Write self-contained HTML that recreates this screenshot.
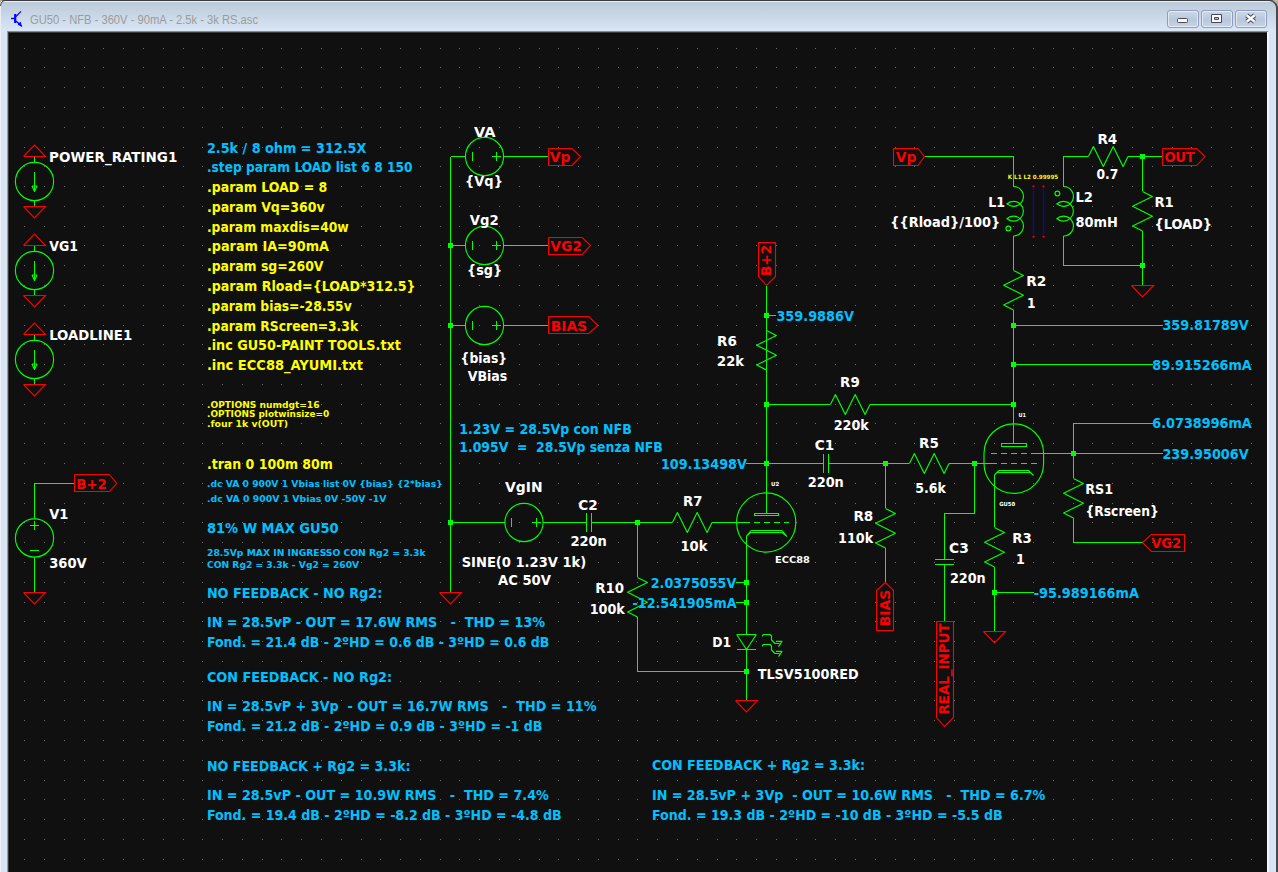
<!DOCTYPE html>
<html><head><meta charset="utf-8"><title>GU50 - NFB - 360V - 90mA - 2.5k - 3k RS.asc</title>
<style>
html,body{margin:0;padding:0;background:#101010;}
#win{position:relative;width:1278px;height:872px;overflow:hidden;background:#d6e4f3;font-family:"Liberation Sans","DejaVu Sans",sans-serif;}
#tb{position:absolute;left:0;top:0;width:1278px;height:32px;background:linear-gradient(#3c3c3c 0,#3c3c3c 1px,#e8eef8 1px,#e8eef8 2px,#bccbdc 2px,#c3d1e0 10px,#d9e6f5 31px);}
#title{position:absolute;left:29.5px;top:12px;font-size:12.3px;line-height:16px;color:#9c9c9c;white-space:nowrap;transform:scaleX(0.909);transform-origin:0 0;}
#client{position:absolute;left:7px;top:31px;width:1260px;height:841px;background:#101010;border-left:1px solid #9a9a9a;border-top:1px solid #8c8c8c;box-shadow:inset 1px 1px 0 #3a3a3a,inset 2px 2px 0 #080808;}
#rb{position:absolute;left:1267px;top:32px;width:2px;height:840px;background:#f4f8fd;}
#re{position:absolute;left:1276px;top:0;width:2px;height:872px;background:#4a4a4a;}
#le{position:absolute;left:0;top:0;width:1px;height:872px;background:#ebeef5;}
.btn{position:absolute;top:10px;width:30px;height:16px;border:1px solid #8f9dc0;border-radius:3px;background:linear-gradient(#cbd8e8,#b7c7dc 55%,#c6d4e6);box-shadow:inset 0 0 0 1px rgba(255,255,255,.55);}
svg{position:absolute;left:0;top:0;}
text{font-family:"DejaVu Sans Condensed","DejaVu Sans","Liberation Sans",sans-serif;font-weight:bold;font-size:13.7px;white-space:pre;}
.w{fill:#fff}.c{fill:#00c0ff}.y{fill:#ffff00}.r{fill:#ff0000}
.rv{fill:#ff0000;font-size:14.6px;}
</style></head><body>
<div id="win">
<div id="tb"></div>
<div id="le"></div><div id="re"></div>
<div id="title">GU50 - NFB - 360V - 90mA - 2.5k - 3k RS.asc</div>
<div class="btn" style="left:1167px"></div><div class="btn" style="left:1201px"></div><div class="btn" style="left:1235px"></div>
<div id="client"></div><div id="rb"></div>
<svg width="1278" height="872" viewBox="0 0 1278 872">
<path d="M0 0h3.5Q0.5 0.5 0 4z" fill="#b9b49c"/><path d="M1278 0h-7Q1277 1 1278 8z" fill="#b9b49c"/><path d="M0.5 6Q1 1 5 0.5" fill="none" stroke="#4a4a4a"/><path d="M1277 9Q1276.5 1.5 1270 0.5" fill="none" stroke="#4a4a4a" stroke-width="1.6"/>
<g id="icon" stroke="#0000ff" fill="none"><path d="M11 18.5h4" stroke-width="1.4"/><path d="M15.2 14v9" stroke-width="2.2"/><path d="M16 16.5l5-5.2" stroke-width="1.1"/><path d="M16 21l6 5.5" stroke-width="1.3"/><path d="M18 24.5l2.5-2.2l0.5 3.2z" fill="#0000ff" stroke-width="1"/></g>
<g id="btnicons">
<rect x="1177.5" y="18.5" width="10" height="4" rx="1" fill="#fafafa" stroke="#46485a"/>
<path d="M1211.5 14.5h10v8h-10z" fill="#fafafa" stroke="#46485a"/><path d="M1214.5 17.5h4v2h-4z" fill="#b8c6da" stroke="#46485a"/>
<path d="M1246.7 15.3l8 6.4M1254.7 15.3l-8 6.4" stroke="#46485a" stroke-width="4.4" fill="none"/><path d="M1246.7 15.3l8 6.4M1254.7 15.3l-8 6.4" stroke="#fafafa" stroke-width="2.5" fill="none"/>
</g>
<path id="dots" d="M24 48h1v1h-1zm20 0h1v1h-1zm20 0h1v1h-1zm20 0h1v1h-1zm19 0h1v1h-1zm20 0h1v1h-1zm20 0h1v1h-1zm20 0h1v1h-1zm20 0h1v1h-1zm19 0h1v1h-1zm20 0h1v1h-1zm20 0h1v1h-1zm20 0h1v1h-1zm19 0h1v1h-1zm20 0h1v1h-1zm20 0h1v1h-1zm20 0h1v1h-1zm20 0h1v1h-1zm19 0h1v1h-1zm20 0h1v1h-1zm20 0h1v1h-1zm20 0h1v1h-1zm19 0h1v1h-1zm20 0h1v1h-1zm20 0h1v1h-1zm20 0h1v1h-1zm20 0h1v1h-1zm19 0h1v1h-1zm20 0h1v1h-1zm20 0h1v1h-1zm20 0h1v1h-1zm19 0h1v1h-1zm20 0h1v1h-1zm20 0h1v1h-1zm20 0h1v1h-1zm20 0h1v1h-1zm19 0h1v1h-1zm20 0h1v1h-1zm20 0h1v1h-1zm20 0h1v1h-1zm19 0h1v1h-1zm20 0h1v1h-1zm20 0h1v1h-1zm20 0h1v1h-1zm20 0h1v1h-1zm19 0h1v1h-1zm20 0h1v1h-1zm20 0h1v1h-1zm20 0h1v1h-1zm20 0h1v1h-1zm19 0h1v1h-1zm20 0h1v1h-1zm20 0h1v1h-1zm20 0h1v1h-1zm19 0h1v1h-1zm20 0h1v1h-1zm20 0h1v1h-1zm20 0h1v1h-1zm20 0h1v1h-1zm19 0h1v1h-1zm20 0h1v1h-1zm20 0h1v1h-1zm20 0h1v1h-1zM24 67h1v1h-1zm20 0h1v1h-1zm20 0h1v1h-1zm20 0h1v1h-1zm19 0h1v1h-1zm20 0h1v1h-1zm20 0h1v1h-1zm20 0h1v1h-1zm20 0h1v1h-1zm19 0h1v1h-1zm20 0h1v1h-1zm20 0h1v1h-1zm20 0h1v1h-1zm19 0h1v1h-1zm20 0h1v1h-1zm20 0h1v1h-1zm20 0h1v1h-1zm20 0h1v1h-1zm19 0h1v1h-1zm20 0h1v1h-1zm20 0h1v1h-1zm20 0h1v1h-1zm19 0h1v1h-1zm20 0h1v1h-1zm20 0h1v1h-1zm20 0h1v1h-1zm20 0h1v1h-1zm19 0h1v1h-1zm20 0h1v1h-1zm20 0h1v1h-1zm20 0h1v1h-1zm19 0h1v1h-1zm20 0h1v1h-1zm20 0h1v1h-1zm20 0h1v1h-1zm20 0h1v1h-1zm19 0h1v1h-1zm20 0h1v1h-1zm20 0h1v1h-1zm20 0h1v1h-1zm19 0h1v1h-1zm20 0h1v1h-1zm20 0h1v1h-1zm20 0h1v1h-1zm20 0h1v1h-1zm19 0h1v1h-1zm20 0h1v1h-1zm20 0h1v1h-1zm20 0h1v1h-1zm20 0h1v1h-1zm19 0h1v1h-1zm20 0h1v1h-1zm20 0h1v1h-1zm20 0h1v1h-1zm19 0h1v1h-1zm20 0h1v1h-1zm20 0h1v1h-1zm20 0h1v1h-1zm20 0h1v1h-1zm19 0h1v1h-1zm20 0h1v1h-1zm20 0h1v1h-1zm20 0h1v1h-1zM24 87h1v1h-1zm20 0h1v1h-1zm20 0h1v1h-1zm20 0h1v1h-1zm19 0h1v1h-1zm20 0h1v1h-1zm20 0h1v1h-1zm20 0h1v1h-1zm20 0h1v1h-1zm19 0h1v1h-1zm20 0h1v1h-1zm20 0h1v1h-1zm20 0h1v1h-1zm19 0h1v1h-1zm20 0h1v1h-1zm20 0h1v1h-1zm20 0h1v1h-1zm20 0h1v1h-1zm19 0h1v1h-1zm20 0h1v1h-1zm20 0h1v1h-1zm20 0h1v1h-1zm19 0h1v1h-1zm20 0h1v1h-1zm20 0h1v1h-1zm20 0h1v1h-1zm20 0h1v1h-1zm19 0h1v1h-1zm20 0h1v1h-1zm20 0h1v1h-1zm20 0h1v1h-1zm19 0h1v1h-1zm20 0h1v1h-1zm20 0h1v1h-1zm20 0h1v1h-1zm20 0h1v1h-1zm19 0h1v1h-1zm20 0h1v1h-1zm20 0h1v1h-1zm20 0h1v1h-1zm19 0h1v1h-1zm20 0h1v1h-1zm20 0h1v1h-1zm20 0h1v1h-1zm20 0h1v1h-1zm19 0h1v1h-1zm20 0h1v1h-1zm20 0h1v1h-1zm20 0h1v1h-1zm20 0h1v1h-1zm19 0h1v1h-1zm20 0h1v1h-1zm20 0h1v1h-1zm20 0h1v1h-1zm19 0h1v1h-1zm20 0h1v1h-1zm20 0h1v1h-1zm20 0h1v1h-1zm20 0h1v1h-1zm19 0h1v1h-1zm20 0h1v1h-1zm20 0h1v1h-1zm20 0h1v1h-1zM24 107h1v1h-1zm20 0h1v1h-1zm20 0h1v1h-1zm20 0h1v1h-1zm19 0h1v1h-1zm20 0h1v1h-1zm20 0h1v1h-1zm20 0h1v1h-1zm20 0h1v1h-1zm19 0h1v1h-1zm20 0h1v1h-1zm20 0h1v1h-1zm20 0h1v1h-1zm19 0h1v1h-1zm20 0h1v1h-1zm20 0h1v1h-1zm20 0h1v1h-1zm20 0h1v1h-1zm19 0h1v1h-1zm20 0h1v1h-1zm20 0h1v1h-1zm20 0h1v1h-1zm19 0h1v1h-1zm20 0h1v1h-1zm20 0h1v1h-1zm20 0h1v1h-1zm20 0h1v1h-1zm19 0h1v1h-1zm20 0h1v1h-1zm20 0h1v1h-1zm20 0h1v1h-1zm19 0h1v1h-1zm20 0h1v1h-1zm20 0h1v1h-1zm20 0h1v1h-1zm20 0h1v1h-1zm19 0h1v1h-1zm20 0h1v1h-1zm20 0h1v1h-1zm20 0h1v1h-1zm19 0h1v1h-1zm20 0h1v1h-1zm20 0h1v1h-1zm20 0h1v1h-1zm20 0h1v1h-1zm19 0h1v1h-1zm20 0h1v1h-1zm20 0h1v1h-1zm20 0h1v1h-1zm20 0h1v1h-1zm19 0h1v1h-1zm20 0h1v1h-1zm20 0h1v1h-1zm20 0h1v1h-1zm19 0h1v1h-1zm20 0h1v1h-1zm20 0h1v1h-1zm20 0h1v1h-1zm20 0h1v1h-1zm19 0h1v1h-1zm20 0h1v1h-1zm20 0h1v1h-1zm20 0h1v1h-1zM24 127h1v1h-1zm20 0h1v1h-1zm20 0h1v1h-1zm20 0h1v1h-1zm19 0h1v1h-1zm20 0h1v1h-1zm20 0h1v1h-1zm20 0h1v1h-1zm20 0h1v1h-1zm19 0h1v1h-1zm20 0h1v1h-1zm20 0h1v1h-1zm20 0h1v1h-1zm19 0h1v1h-1zm20 0h1v1h-1zm20 0h1v1h-1zm20 0h1v1h-1zm20 0h1v1h-1zm19 0h1v1h-1zm20 0h1v1h-1zm20 0h1v1h-1zm20 0h1v1h-1zm19 0h1v1h-1zm20 0h1v1h-1zm20 0h1v1h-1zm20 0h1v1h-1zm20 0h1v1h-1zm19 0h1v1h-1zm20 0h1v1h-1zm20 0h1v1h-1zm20 0h1v1h-1zm19 0h1v1h-1zm20 0h1v1h-1zm20 0h1v1h-1zm20 0h1v1h-1zm20 0h1v1h-1zm19 0h1v1h-1zm20 0h1v1h-1zm20 0h1v1h-1zm20 0h1v1h-1zm19 0h1v1h-1zm20 0h1v1h-1zm20 0h1v1h-1zm20 0h1v1h-1zm20 0h1v1h-1zm19 0h1v1h-1zm20 0h1v1h-1zm20 0h1v1h-1zm20 0h1v1h-1zm20 0h1v1h-1zm19 0h1v1h-1zm20 0h1v1h-1zm20 0h1v1h-1zm20 0h1v1h-1zm19 0h1v1h-1zm20 0h1v1h-1zm20 0h1v1h-1zm20 0h1v1h-1zm20 0h1v1h-1zm19 0h1v1h-1zm20 0h1v1h-1zm20 0h1v1h-1zm20 0h1v1h-1zM24 147h1v1h-1zm20 0h1v1h-1zm20 0h1v1h-1zm20 0h1v1h-1zm19 0h1v1h-1zm20 0h1v1h-1zm20 0h1v1h-1zm20 0h1v1h-1zm20 0h1v1h-1zm19 0h1v1h-1zm20 0h1v1h-1zm20 0h1v1h-1zm20 0h1v1h-1zm19 0h1v1h-1zm20 0h1v1h-1zm20 0h1v1h-1zm20 0h1v1h-1zm20 0h1v1h-1zm19 0h1v1h-1zm20 0h1v1h-1zm20 0h1v1h-1zm20 0h1v1h-1zm19 0h1v1h-1zm20 0h1v1h-1zm20 0h1v1h-1zm20 0h1v1h-1zm20 0h1v1h-1zm19 0h1v1h-1zm20 0h1v1h-1zm20 0h1v1h-1zm20 0h1v1h-1zm19 0h1v1h-1zm20 0h1v1h-1zm20 0h1v1h-1zm20 0h1v1h-1zm20 0h1v1h-1zm19 0h1v1h-1zm20 0h1v1h-1zm20 0h1v1h-1zm20 0h1v1h-1zm19 0h1v1h-1zm20 0h1v1h-1zm20 0h1v1h-1zm20 0h1v1h-1zm20 0h1v1h-1zm19 0h1v1h-1zm20 0h1v1h-1zm20 0h1v1h-1zm20 0h1v1h-1zm20 0h1v1h-1zm19 0h1v1h-1zm20 0h1v1h-1zm20 0h1v1h-1zm20 0h1v1h-1zm19 0h1v1h-1zm20 0h1v1h-1zm20 0h1v1h-1zm20 0h1v1h-1zm20 0h1v1h-1zm19 0h1v1h-1zm20 0h1v1h-1zm20 0h1v1h-1zm20 0h1v1h-1zM24 166h1v1h-1zm20 0h1v1h-1zm20 0h1v1h-1zm20 0h1v1h-1zm19 0h1v1h-1zm20 0h1v1h-1zm20 0h1v1h-1zm20 0h1v1h-1zm20 0h1v1h-1zm19 0h1v1h-1zm20 0h1v1h-1zm20 0h1v1h-1zm20 0h1v1h-1zm19 0h1v1h-1zm20 0h1v1h-1zm20 0h1v1h-1zm20 0h1v1h-1zm20 0h1v1h-1zm19 0h1v1h-1zm20 0h1v1h-1zm20 0h1v1h-1zm20 0h1v1h-1zm19 0h1v1h-1zm20 0h1v1h-1zm20 0h1v1h-1zm20 0h1v1h-1zm20 0h1v1h-1zm19 0h1v1h-1zm20 0h1v1h-1zm20 0h1v1h-1zm20 0h1v1h-1zm19 0h1v1h-1zm20 0h1v1h-1zm20 0h1v1h-1zm20 0h1v1h-1zm20 0h1v1h-1zm19 0h1v1h-1zm20 0h1v1h-1zm20 0h1v1h-1zm20 0h1v1h-1zm19 0h1v1h-1zm20 0h1v1h-1zm20 0h1v1h-1zm20 0h1v1h-1zm20 0h1v1h-1zm19 0h1v1h-1zm20 0h1v1h-1zm20 0h1v1h-1zm20 0h1v1h-1zm20 0h1v1h-1zm19 0h1v1h-1zm20 0h1v1h-1zm20 0h1v1h-1zm20 0h1v1h-1zm19 0h1v1h-1zm20 0h1v1h-1zm20 0h1v1h-1zm20 0h1v1h-1zm20 0h1v1h-1zm19 0h1v1h-1zm20 0h1v1h-1zm20 0h1v1h-1zm20 0h1v1h-1zM24 186h1v1h-1zm20 0h1v1h-1zm20 0h1v1h-1zm20 0h1v1h-1zm19 0h1v1h-1zm20 0h1v1h-1zm20 0h1v1h-1zm20 0h1v1h-1zm20 0h1v1h-1zm19 0h1v1h-1zm20 0h1v1h-1zm20 0h1v1h-1zm20 0h1v1h-1zm19 0h1v1h-1zm20 0h1v1h-1zm20 0h1v1h-1zm20 0h1v1h-1zm20 0h1v1h-1zm19 0h1v1h-1zm20 0h1v1h-1zm20 0h1v1h-1zm20 0h1v1h-1zm19 0h1v1h-1zm20 0h1v1h-1zm20 0h1v1h-1zm20 0h1v1h-1zm20 0h1v1h-1zm19 0h1v1h-1zm20 0h1v1h-1zm20 0h1v1h-1zm20 0h1v1h-1zm19 0h1v1h-1zm20 0h1v1h-1zm20 0h1v1h-1zm20 0h1v1h-1zm20 0h1v1h-1zm19 0h1v1h-1zm20 0h1v1h-1zm20 0h1v1h-1zm20 0h1v1h-1zm19 0h1v1h-1zm20 0h1v1h-1zm20 0h1v1h-1zm20 0h1v1h-1zm20 0h1v1h-1zm19 0h1v1h-1zm20 0h1v1h-1zm20 0h1v1h-1zm20 0h1v1h-1zm20 0h1v1h-1zm19 0h1v1h-1zm20 0h1v1h-1zm20 0h1v1h-1zm20 0h1v1h-1zm19 0h1v1h-1zm20 0h1v1h-1zm20 0h1v1h-1zm20 0h1v1h-1zm20 0h1v1h-1zm19 0h1v1h-1zm20 0h1v1h-1zm20 0h1v1h-1zm20 0h1v1h-1zM24 206h1v1h-1zm20 0h1v1h-1zm20 0h1v1h-1zm20 0h1v1h-1zm19 0h1v1h-1zm20 0h1v1h-1zm20 0h1v1h-1zm20 0h1v1h-1zm20 0h1v1h-1zm19 0h1v1h-1zm20 0h1v1h-1zm20 0h1v1h-1zm20 0h1v1h-1zm19 0h1v1h-1zm20 0h1v1h-1zm20 0h1v1h-1zm20 0h1v1h-1zm20 0h1v1h-1zm19 0h1v1h-1zm20 0h1v1h-1zm20 0h1v1h-1zm20 0h1v1h-1zm19 0h1v1h-1zm20 0h1v1h-1zm20 0h1v1h-1zm20 0h1v1h-1zm20 0h1v1h-1zm19 0h1v1h-1zm20 0h1v1h-1zm20 0h1v1h-1zm20 0h1v1h-1zm19 0h1v1h-1zm20 0h1v1h-1zm20 0h1v1h-1zm20 0h1v1h-1zm20 0h1v1h-1zm19 0h1v1h-1zm20 0h1v1h-1zm20 0h1v1h-1zm20 0h1v1h-1zm19 0h1v1h-1zm20 0h1v1h-1zm20 0h1v1h-1zm20 0h1v1h-1zm20 0h1v1h-1zm19 0h1v1h-1zm20 0h1v1h-1zm20 0h1v1h-1zm20 0h1v1h-1zm20 0h1v1h-1zm19 0h1v1h-1zm20 0h1v1h-1zm20 0h1v1h-1zm20 0h1v1h-1zm19 0h1v1h-1zm20 0h1v1h-1zm20 0h1v1h-1zm20 0h1v1h-1zm20 0h1v1h-1zm19 0h1v1h-1zm20 0h1v1h-1zm20 0h1v1h-1zm20 0h1v1h-1zM24 226h1v1h-1zm20 0h1v1h-1zm20 0h1v1h-1zm20 0h1v1h-1zm19 0h1v1h-1zm20 0h1v1h-1zm20 0h1v1h-1zm20 0h1v1h-1zm20 0h1v1h-1zm19 0h1v1h-1zm20 0h1v1h-1zm20 0h1v1h-1zm20 0h1v1h-1zm19 0h1v1h-1zm20 0h1v1h-1zm20 0h1v1h-1zm20 0h1v1h-1zm20 0h1v1h-1zm19 0h1v1h-1zm20 0h1v1h-1zm20 0h1v1h-1zm20 0h1v1h-1zm19 0h1v1h-1zm20 0h1v1h-1zm20 0h1v1h-1zm20 0h1v1h-1zm20 0h1v1h-1zm19 0h1v1h-1zm20 0h1v1h-1zm20 0h1v1h-1zm20 0h1v1h-1zm19 0h1v1h-1zm20 0h1v1h-1zm20 0h1v1h-1zm20 0h1v1h-1zm20 0h1v1h-1zm19 0h1v1h-1zm20 0h1v1h-1zm20 0h1v1h-1zm20 0h1v1h-1zm19 0h1v1h-1zm20 0h1v1h-1zm20 0h1v1h-1zm20 0h1v1h-1zm20 0h1v1h-1zm19 0h1v1h-1zm20 0h1v1h-1zm20 0h1v1h-1zm20 0h1v1h-1zm20 0h1v1h-1zm19 0h1v1h-1zm20 0h1v1h-1zm20 0h1v1h-1zm20 0h1v1h-1zm19 0h1v1h-1zm20 0h1v1h-1zm20 0h1v1h-1zm20 0h1v1h-1zm20 0h1v1h-1zm19 0h1v1h-1zm20 0h1v1h-1zm20 0h1v1h-1zm20 0h1v1h-1zM24 245h1v1h-1zm20 0h1v1h-1zm20 0h1v1h-1zm20 0h1v1h-1zm19 0h1v1h-1zm20 0h1v1h-1zm20 0h1v1h-1zm20 0h1v1h-1zm20 0h1v1h-1zm19 0h1v1h-1zm20 0h1v1h-1zm20 0h1v1h-1zm20 0h1v1h-1zm19 0h1v1h-1zm20 0h1v1h-1zm20 0h1v1h-1zm20 0h1v1h-1zm20 0h1v1h-1zm19 0h1v1h-1zm20 0h1v1h-1zm20 0h1v1h-1zm20 0h1v1h-1zm19 0h1v1h-1zm20 0h1v1h-1zm20 0h1v1h-1zm20 0h1v1h-1zm20 0h1v1h-1zm19 0h1v1h-1zm20 0h1v1h-1zm20 0h1v1h-1zm20 0h1v1h-1zm19 0h1v1h-1zm20 0h1v1h-1zm20 0h1v1h-1zm20 0h1v1h-1zm20 0h1v1h-1zm19 0h1v1h-1zm20 0h1v1h-1zm20 0h1v1h-1zm20 0h1v1h-1zm19 0h1v1h-1zm20 0h1v1h-1zm20 0h1v1h-1zm20 0h1v1h-1zm20 0h1v1h-1zm19 0h1v1h-1zm20 0h1v1h-1zm20 0h1v1h-1zm20 0h1v1h-1zm20 0h1v1h-1zm19 0h1v1h-1zm20 0h1v1h-1zm20 0h1v1h-1zm20 0h1v1h-1zm19 0h1v1h-1zm20 0h1v1h-1zm20 0h1v1h-1zm20 0h1v1h-1zm20 0h1v1h-1zm19 0h1v1h-1zm20 0h1v1h-1zm20 0h1v1h-1zm20 0h1v1h-1zM24 265h1v1h-1zm20 0h1v1h-1zm20 0h1v1h-1zm20 0h1v1h-1zm19 0h1v1h-1zm20 0h1v1h-1zm20 0h1v1h-1zm20 0h1v1h-1zm20 0h1v1h-1zm19 0h1v1h-1zm20 0h1v1h-1zm20 0h1v1h-1zm20 0h1v1h-1zm19 0h1v1h-1zm20 0h1v1h-1zm20 0h1v1h-1zm20 0h1v1h-1zm20 0h1v1h-1zm19 0h1v1h-1zm20 0h1v1h-1zm20 0h1v1h-1zm20 0h1v1h-1zm19 0h1v1h-1zm20 0h1v1h-1zm20 0h1v1h-1zm20 0h1v1h-1zm20 0h1v1h-1zm19 0h1v1h-1zm20 0h1v1h-1zm20 0h1v1h-1zm20 0h1v1h-1zm19 0h1v1h-1zm20 0h1v1h-1zm20 0h1v1h-1zm20 0h1v1h-1zm20 0h1v1h-1zm19 0h1v1h-1zm20 0h1v1h-1zm20 0h1v1h-1zm20 0h1v1h-1zm19 0h1v1h-1zm20 0h1v1h-1zm20 0h1v1h-1zm20 0h1v1h-1zm20 0h1v1h-1zm19 0h1v1h-1zm20 0h1v1h-1zm20 0h1v1h-1zm20 0h1v1h-1zm20 0h1v1h-1zm19 0h1v1h-1zm20 0h1v1h-1zm20 0h1v1h-1zm20 0h1v1h-1zm19 0h1v1h-1zm20 0h1v1h-1zm20 0h1v1h-1zm20 0h1v1h-1zm20 0h1v1h-1zm19 0h1v1h-1zm20 0h1v1h-1zm20 0h1v1h-1zm20 0h1v1h-1zM24 285h1v1h-1zm20 0h1v1h-1zm20 0h1v1h-1zm20 0h1v1h-1zm19 0h1v1h-1zm20 0h1v1h-1zm20 0h1v1h-1zm20 0h1v1h-1zm20 0h1v1h-1zm19 0h1v1h-1zm20 0h1v1h-1zm20 0h1v1h-1zm20 0h1v1h-1zm19 0h1v1h-1zm20 0h1v1h-1zm20 0h1v1h-1zm20 0h1v1h-1zm20 0h1v1h-1zm19 0h1v1h-1zm20 0h1v1h-1zm20 0h1v1h-1zm20 0h1v1h-1zm19 0h1v1h-1zm20 0h1v1h-1zm20 0h1v1h-1zm20 0h1v1h-1zm20 0h1v1h-1zm19 0h1v1h-1zm20 0h1v1h-1zm20 0h1v1h-1zm20 0h1v1h-1zm19 0h1v1h-1zm20 0h1v1h-1zm20 0h1v1h-1zm20 0h1v1h-1zm20 0h1v1h-1zm19 0h1v1h-1zm20 0h1v1h-1zm20 0h1v1h-1zm20 0h1v1h-1zm19 0h1v1h-1zm20 0h1v1h-1zm20 0h1v1h-1zm20 0h1v1h-1zm20 0h1v1h-1zm19 0h1v1h-1zm20 0h1v1h-1zm20 0h1v1h-1zm20 0h1v1h-1zm20 0h1v1h-1zm19 0h1v1h-1zm20 0h1v1h-1zm20 0h1v1h-1zm20 0h1v1h-1zm19 0h1v1h-1zm20 0h1v1h-1zm20 0h1v1h-1zm20 0h1v1h-1zm20 0h1v1h-1zm19 0h1v1h-1zm20 0h1v1h-1zm20 0h1v1h-1zm20 0h1v1h-1zM24 305h1v1h-1zm20 0h1v1h-1zm20 0h1v1h-1zm20 0h1v1h-1zm19 0h1v1h-1zm20 0h1v1h-1zm20 0h1v1h-1zm20 0h1v1h-1zm20 0h1v1h-1zm19 0h1v1h-1zm20 0h1v1h-1zm20 0h1v1h-1zm20 0h1v1h-1zm19 0h1v1h-1zm20 0h1v1h-1zm20 0h1v1h-1zm20 0h1v1h-1zm20 0h1v1h-1zm19 0h1v1h-1zm20 0h1v1h-1zm20 0h1v1h-1zm20 0h1v1h-1zm19 0h1v1h-1zm20 0h1v1h-1zm20 0h1v1h-1zm20 0h1v1h-1zm20 0h1v1h-1zm19 0h1v1h-1zm20 0h1v1h-1zm20 0h1v1h-1zm20 0h1v1h-1zm19 0h1v1h-1zm20 0h1v1h-1zm20 0h1v1h-1zm20 0h1v1h-1zm20 0h1v1h-1zm19 0h1v1h-1zm20 0h1v1h-1zm20 0h1v1h-1zm20 0h1v1h-1zm19 0h1v1h-1zm20 0h1v1h-1zm20 0h1v1h-1zm20 0h1v1h-1zm20 0h1v1h-1zm19 0h1v1h-1zm20 0h1v1h-1zm20 0h1v1h-1zm20 0h1v1h-1zm20 0h1v1h-1zm19 0h1v1h-1zm20 0h1v1h-1zm20 0h1v1h-1zm20 0h1v1h-1zm19 0h1v1h-1zm20 0h1v1h-1zm20 0h1v1h-1zm20 0h1v1h-1zm20 0h1v1h-1zm19 0h1v1h-1zm20 0h1v1h-1zm20 0h1v1h-1zm20 0h1v1h-1zM24 325h1v1h-1zm20 0h1v1h-1zm20 0h1v1h-1zm20 0h1v1h-1zm19 0h1v1h-1zm20 0h1v1h-1zm20 0h1v1h-1zm20 0h1v1h-1zm20 0h1v1h-1zm19 0h1v1h-1zm20 0h1v1h-1zm20 0h1v1h-1zm20 0h1v1h-1zm19 0h1v1h-1zm20 0h1v1h-1zm20 0h1v1h-1zm20 0h1v1h-1zm20 0h1v1h-1zm19 0h1v1h-1zm20 0h1v1h-1zm20 0h1v1h-1zm20 0h1v1h-1zm19 0h1v1h-1zm20 0h1v1h-1zm20 0h1v1h-1zm20 0h1v1h-1zm20 0h1v1h-1zm19 0h1v1h-1zm20 0h1v1h-1zm20 0h1v1h-1zm20 0h1v1h-1zm19 0h1v1h-1zm20 0h1v1h-1zm20 0h1v1h-1zm20 0h1v1h-1zm20 0h1v1h-1zm19 0h1v1h-1zm20 0h1v1h-1zm20 0h1v1h-1zm20 0h1v1h-1zm19 0h1v1h-1zm20 0h1v1h-1zm20 0h1v1h-1zm20 0h1v1h-1zm20 0h1v1h-1zm19 0h1v1h-1zm20 0h1v1h-1zm20 0h1v1h-1zm20 0h1v1h-1zm20 0h1v1h-1zm19 0h1v1h-1zm20 0h1v1h-1zm20 0h1v1h-1zm20 0h1v1h-1zm19 0h1v1h-1zm20 0h1v1h-1zm20 0h1v1h-1zm20 0h1v1h-1zm20 0h1v1h-1zm19 0h1v1h-1zm20 0h1v1h-1zm20 0h1v1h-1zm20 0h1v1h-1zM24 344h1v1h-1zm20 0h1v1h-1zm20 0h1v1h-1zm20 0h1v1h-1zm19 0h1v1h-1zm20 0h1v1h-1zm20 0h1v1h-1zm20 0h1v1h-1zm20 0h1v1h-1zm19 0h1v1h-1zm20 0h1v1h-1zm20 0h1v1h-1zm20 0h1v1h-1zm19 0h1v1h-1zm20 0h1v1h-1zm20 0h1v1h-1zm20 0h1v1h-1zm20 0h1v1h-1zm19 0h1v1h-1zm20 0h1v1h-1zm20 0h1v1h-1zm20 0h1v1h-1zm19 0h1v1h-1zm20 0h1v1h-1zm20 0h1v1h-1zm20 0h1v1h-1zm20 0h1v1h-1zm19 0h1v1h-1zm20 0h1v1h-1zm20 0h1v1h-1zm20 0h1v1h-1zm19 0h1v1h-1zm20 0h1v1h-1zm20 0h1v1h-1zm20 0h1v1h-1zm20 0h1v1h-1zm19 0h1v1h-1zm20 0h1v1h-1zm20 0h1v1h-1zm20 0h1v1h-1zm19 0h1v1h-1zm20 0h1v1h-1zm20 0h1v1h-1zm20 0h1v1h-1zm20 0h1v1h-1zm19 0h1v1h-1zm20 0h1v1h-1zm20 0h1v1h-1zm20 0h1v1h-1zm20 0h1v1h-1zm19 0h1v1h-1zm20 0h1v1h-1zm20 0h1v1h-1zm20 0h1v1h-1zm19 0h1v1h-1zm20 0h1v1h-1zm20 0h1v1h-1zm20 0h1v1h-1zm20 0h1v1h-1zm19 0h1v1h-1zm20 0h1v1h-1zm20 0h1v1h-1zm20 0h1v1h-1zM24 364h1v1h-1zm20 0h1v1h-1zm20 0h1v1h-1zm20 0h1v1h-1zm19 0h1v1h-1zm20 0h1v1h-1zm20 0h1v1h-1zm20 0h1v1h-1zm20 0h1v1h-1zm19 0h1v1h-1zm20 0h1v1h-1zm20 0h1v1h-1zm20 0h1v1h-1zm19 0h1v1h-1zm20 0h1v1h-1zm20 0h1v1h-1zm20 0h1v1h-1zm20 0h1v1h-1zm19 0h1v1h-1zm20 0h1v1h-1zm20 0h1v1h-1zm20 0h1v1h-1zm19 0h1v1h-1zm20 0h1v1h-1zm20 0h1v1h-1zm20 0h1v1h-1zm20 0h1v1h-1zm19 0h1v1h-1zm20 0h1v1h-1zm20 0h1v1h-1zm20 0h1v1h-1zm19 0h1v1h-1zm20 0h1v1h-1zm20 0h1v1h-1zm20 0h1v1h-1zm20 0h1v1h-1zm19 0h1v1h-1zm20 0h1v1h-1zm20 0h1v1h-1zm20 0h1v1h-1zm19 0h1v1h-1zm20 0h1v1h-1zm20 0h1v1h-1zm20 0h1v1h-1zm20 0h1v1h-1zm19 0h1v1h-1zm20 0h1v1h-1zm20 0h1v1h-1zm20 0h1v1h-1zm20 0h1v1h-1zm19 0h1v1h-1zm20 0h1v1h-1zm20 0h1v1h-1zm20 0h1v1h-1zm19 0h1v1h-1zm20 0h1v1h-1zm20 0h1v1h-1zm20 0h1v1h-1zm20 0h1v1h-1zm19 0h1v1h-1zm20 0h1v1h-1zm20 0h1v1h-1zm20 0h1v1h-1zM24 384h1v1h-1zm20 0h1v1h-1zm20 0h1v1h-1zm20 0h1v1h-1zm19 0h1v1h-1zm20 0h1v1h-1zm20 0h1v1h-1zm20 0h1v1h-1zm20 0h1v1h-1zm19 0h1v1h-1zm20 0h1v1h-1zm20 0h1v1h-1zm20 0h1v1h-1zm19 0h1v1h-1zm20 0h1v1h-1zm20 0h1v1h-1zm20 0h1v1h-1zm20 0h1v1h-1zm19 0h1v1h-1zm20 0h1v1h-1zm20 0h1v1h-1zm20 0h1v1h-1zm19 0h1v1h-1zm20 0h1v1h-1zm20 0h1v1h-1zm20 0h1v1h-1zm20 0h1v1h-1zm19 0h1v1h-1zm20 0h1v1h-1zm20 0h1v1h-1zm20 0h1v1h-1zm19 0h1v1h-1zm20 0h1v1h-1zm20 0h1v1h-1zm20 0h1v1h-1zm20 0h1v1h-1zm19 0h1v1h-1zm20 0h1v1h-1zm20 0h1v1h-1zm20 0h1v1h-1zm19 0h1v1h-1zm20 0h1v1h-1zm20 0h1v1h-1zm20 0h1v1h-1zm20 0h1v1h-1zm19 0h1v1h-1zm20 0h1v1h-1zm20 0h1v1h-1zm20 0h1v1h-1zm20 0h1v1h-1zm19 0h1v1h-1zm20 0h1v1h-1zm20 0h1v1h-1zm20 0h1v1h-1zm19 0h1v1h-1zm20 0h1v1h-1zm20 0h1v1h-1zm20 0h1v1h-1zm20 0h1v1h-1zm19 0h1v1h-1zm20 0h1v1h-1zm20 0h1v1h-1zm20 0h1v1h-1zM24 404h1v1h-1zm20 0h1v1h-1zm20 0h1v1h-1zm20 0h1v1h-1zm19 0h1v1h-1zm20 0h1v1h-1zm20 0h1v1h-1zm20 0h1v1h-1zm20 0h1v1h-1zm19 0h1v1h-1zm20 0h1v1h-1zm20 0h1v1h-1zm20 0h1v1h-1zm19 0h1v1h-1zm20 0h1v1h-1zm20 0h1v1h-1zm20 0h1v1h-1zm20 0h1v1h-1zm19 0h1v1h-1zm20 0h1v1h-1zm20 0h1v1h-1zm20 0h1v1h-1zm19 0h1v1h-1zm20 0h1v1h-1zm20 0h1v1h-1zm20 0h1v1h-1zm20 0h1v1h-1zm19 0h1v1h-1zm20 0h1v1h-1zm20 0h1v1h-1zm20 0h1v1h-1zm19 0h1v1h-1zm20 0h1v1h-1zm20 0h1v1h-1zm20 0h1v1h-1zm20 0h1v1h-1zm19 0h1v1h-1zm20 0h1v1h-1zm20 0h1v1h-1zm20 0h1v1h-1zm19 0h1v1h-1zm20 0h1v1h-1zm20 0h1v1h-1zm20 0h1v1h-1zm20 0h1v1h-1zm19 0h1v1h-1zm20 0h1v1h-1zm20 0h1v1h-1zm20 0h1v1h-1zm20 0h1v1h-1zm19 0h1v1h-1zm20 0h1v1h-1zm20 0h1v1h-1zm20 0h1v1h-1zm19 0h1v1h-1zm20 0h1v1h-1zm20 0h1v1h-1zm20 0h1v1h-1zm20 0h1v1h-1zm19 0h1v1h-1zm20 0h1v1h-1zm20 0h1v1h-1zm20 0h1v1h-1zM24 423h1v1h-1zm20 0h1v1h-1zm20 0h1v1h-1zm20 0h1v1h-1zm19 0h1v1h-1zm20 0h1v1h-1zm20 0h1v1h-1zm20 0h1v1h-1zm20 0h1v1h-1zm19 0h1v1h-1zm20 0h1v1h-1zm20 0h1v1h-1zm20 0h1v1h-1zm19 0h1v1h-1zm20 0h1v1h-1zm20 0h1v1h-1zm20 0h1v1h-1zm20 0h1v1h-1zm19 0h1v1h-1zm20 0h1v1h-1zm20 0h1v1h-1zm20 0h1v1h-1zm19 0h1v1h-1zm20 0h1v1h-1zm20 0h1v1h-1zm20 0h1v1h-1zm20 0h1v1h-1zm19 0h1v1h-1zm20 0h1v1h-1zm20 0h1v1h-1zm20 0h1v1h-1zm19 0h1v1h-1zm20 0h1v1h-1zm20 0h1v1h-1zm20 0h1v1h-1zm20 0h1v1h-1zm19 0h1v1h-1zm20 0h1v1h-1zm20 0h1v1h-1zm20 0h1v1h-1zm19 0h1v1h-1zm20 0h1v1h-1zm20 0h1v1h-1zm20 0h1v1h-1zm20 0h1v1h-1zm19 0h1v1h-1zm20 0h1v1h-1zm20 0h1v1h-1zm20 0h1v1h-1zm20 0h1v1h-1zm19 0h1v1h-1zm20 0h1v1h-1zm20 0h1v1h-1zm20 0h1v1h-1zm19 0h1v1h-1zm20 0h1v1h-1zm20 0h1v1h-1zm20 0h1v1h-1zm20 0h1v1h-1zm19 0h1v1h-1zm20 0h1v1h-1zm20 0h1v1h-1zm20 0h1v1h-1zM24 443h1v1h-1zm20 0h1v1h-1zm20 0h1v1h-1zm20 0h1v1h-1zm19 0h1v1h-1zm20 0h1v1h-1zm20 0h1v1h-1zm20 0h1v1h-1zm20 0h1v1h-1zm19 0h1v1h-1zm20 0h1v1h-1zm20 0h1v1h-1zm20 0h1v1h-1zm19 0h1v1h-1zm20 0h1v1h-1zm20 0h1v1h-1zm20 0h1v1h-1zm20 0h1v1h-1zm19 0h1v1h-1zm20 0h1v1h-1zm20 0h1v1h-1zm20 0h1v1h-1zm19 0h1v1h-1zm20 0h1v1h-1zm20 0h1v1h-1zm20 0h1v1h-1zm20 0h1v1h-1zm19 0h1v1h-1zm20 0h1v1h-1zm20 0h1v1h-1zm20 0h1v1h-1zm19 0h1v1h-1zm20 0h1v1h-1zm20 0h1v1h-1zm20 0h1v1h-1zm20 0h1v1h-1zm19 0h1v1h-1zm20 0h1v1h-1zm20 0h1v1h-1zm20 0h1v1h-1zm19 0h1v1h-1zm20 0h1v1h-1zm20 0h1v1h-1zm20 0h1v1h-1zm20 0h1v1h-1zm19 0h1v1h-1zm20 0h1v1h-1zm20 0h1v1h-1zm20 0h1v1h-1zm20 0h1v1h-1zm19 0h1v1h-1zm20 0h1v1h-1zm20 0h1v1h-1zm20 0h1v1h-1zm19 0h1v1h-1zm20 0h1v1h-1zm20 0h1v1h-1zm20 0h1v1h-1zm20 0h1v1h-1zm19 0h1v1h-1zm20 0h1v1h-1zm20 0h1v1h-1zm20 0h1v1h-1zM24 463h1v1h-1zm20 0h1v1h-1zm20 0h1v1h-1zm20 0h1v1h-1zm19 0h1v1h-1zm20 0h1v1h-1zm20 0h1v1h-1zm20 0h1v1h-1zm20 0h1v1h-1zm19 0h1v1h-1zm20 0h1v1h-1zm20 0h1v1h-1zm20 0h1v1h-1zm19 0h1v1h-1zm20 0h1v1h-1zm20 0h1v1h-1zm20 0h1v1h-1zm20 0h1v1h-1zm19 0h1v1h-1zm20 0h1v1h-1zm20 0h1v1h-1zm20 0h1v1h-1zm19 0h1v1h-1zm20 0h1v1h-1zm20 0h1v1h-1zm20 0h1v1h-1zm20 0h1v1h-1zm19 0h1v1h-1zm20 0h1v1h-1zm20 0h1v1h-1zm20 0h1v1h-1zm19 0h1v1h-1zm20 0h1v1h-1zm20 0h1v1h-1zm20 0h1v1h-1zm20 0h1v1h-1zm19 0h1v1h-1zm20 0h1v1h-1zm20 0h1v1h-1zm20 0h1v1h-1zm19 0h1v1h-1zm20 0h1v1h-1zm20 0h1v1h-1zm20 0h1v1h-1zm20 0h1v1h-1zm19 0h1v1h-1zm20 0h1v1h-1zm20 0h1v1h-1zm20 0h1v1h-1zm20 0h1v1h-1zm19 0h1v1h-1zm20 0h1v1h-1zm20 0h1v1h-1zm20 0h1v1h-1zm19 0h1v1h-1zm20 0h1v1h-1zm20 0h1v1h-1zm20 0h1v1h-1zm20 0h1v1h-1zm19 0h1v1h-1zm20 0h1v1h-1zm20 0h1v1h-1zm20 0h1v1h-1zM24 483h1v1h-1zm20 0h1v1h-1zm20 0h1v1h-1zm20 0h1v1h-1zm19 0h1v1h-1zm20 0h1v1h-1zm20 0h1v1h-1zm20 0h1v1h-1zm20 0h1v1h-1zm19 0h1v1h-1zm20 0h1v1h-1zm20 0h1v1h-1zm20 0h1v1h-1zm19 0h1v1h-1zm20 0h1v1h-1zm20 0h1v1h-1zm20 0h1v1h-1zm20 0h1v1h-1zm19 0h1v1h-1zm20 0h1v1h-1zm20 0h1v1h-1zm20 0h1v1h-1zm19 0h1v1h-1zm20 0h1v1h-1zm20 0h1v1h-1zm20 0h1v1h-1zm20 0h1v1h-1zm19 0h1v1h-1zm20 0h1v1h-1zm20 0h1v1h-1zm20 0h1v1h-1zm19 0h1v1h-1zm20 0h1v1h-1zm20 0h1v1h-1zm20 0h1v1h-1zm20 0h1v1h-1zm19 0h1v1h-1zm20 0h1v1h-1zm20 0h1v1h-1zm20 0h1v1h-1zm19 0h1v1h-1zm20 0h1v1h-1zm20 0h1v1h-1zm20 0h1v1h-1zm20 0h1v1h-1zm19 0h1v1h-1zm20 0h1v1h-1zm20 0h1v1h-1zm20 0h1v1h-1zm20 0h1v1h-1zm19 0h1v1h-1zm20 0h1v1h-1zm20 0h1v1h-1zm20 0h1v1h-1zm19 0h1v1h-1zm20 0h1v1h-1zm20 0h1v1h-1zm20 0h1v1h-1zm20 0h1v1h-1zm19 0h1v1h-1zm20 0h1v1h-1zm20 0h1v1h-1zm20 0h1v1h-1zM24 503h1v1h-1zm20 0h1v1h-1zm20 0h1v1h-1zm20 0h1v1h-1zm19 0h1v1h-1zm20 0h1v1h-1zm20 0h1v1h-1zm20 0h1v1h-1zm20 0h1v1h-1zm19 0h1v1h-1zm20 0h1v1h-1zm20 0h1v1h-1zm20 0h1v1h-1zm19 0h1v1h-1zm20 0h1v1h-1zm20 0h1v1h-1zm20 0h1v1h-1zm20 0h1v1h-1zm19 0h1v1h-1zm20 0h1v1h-1zm20 0h1v1h-1zm20 0h1v1h-1zm19 0h1v1h-1zm20 0h1v1h-1zm20 0h1v1h-1zm20 0h1v1h-1zm20 0h1v1h-1zm19 0h1v1h-1zm20 0h1v1h-1zm20 0h1v1h-1zm20 0h1v1h-1zm19 0h1v1h-1zm20 0h1v1h-1zm20 0h1v1h-1zm20 0h1v1h-1zm20 0h1v1h-1zm19 0h1v1h-1zm20 0h1v1h-1zm20 0h1v1h-1zm20 0h1v1h-1zm19 0h1v1h-1zm20 0h1v1h-1zm20 0h1v1h-1zm20 0h1v1h-1zm20 0h1v1h-1zm19 0h1v1h-1zm20 0h1v1h-1zm20 0h1v1h-1zm20 0h1v1h-1zm20 0h1v1h-1zm19 0h1v1h-1zm20 0h1v1h-1zm20 0h1v1h-1zm20 0h1v1h-1zm19 0h1v1h-1zm20 0h1v1h-1zm20 0h1v1h-1zm20 0h1v1h-1zm20 0h1v1h-1zm19 0h1v1h-1zm20 0h1v1h-1zm20 0h1v1h-1zm20 0h1v1h-1zM24 522h1v1h-1zm20 0h1v1h-1zm20 0h1v1h-1zm20 0h1v1h-1zm19 0h1v1h-1zm20 0h1v1h-1zm20 0h1v1h-1zm20 0h1v1h-1zm20 0h1v1h-1zm19 0h1v1h-1zm20 0h1v1h-1zm20 0h1v1h-1zm20 0h1v1h-1zm19 0h1v1h-1zm20 0h1v1h-1zm20 0h1v1h-1zm20 0h1v1h-1zm20 0h1v1h-1zm19 0h1v1h-1zm20 0h1v1h-1zm20 0h1v1h-1zm20 0h1v1h-1zm19 0h1v1h-1zm20 0h1v1h-1zm20 0h1v1h-1zm20 0h1v1h-1zm20 0h1v1h-1zm19 0h1v1h-1zm20 0h1v1h-1zm20 0h1v1h-1zm20 0h1v1h-1zm19 0h1v1h-1zm20 0h1v1h-1zm20 0h1v1h-1zm20 0h1v1h-1zm20 0h1v1h-1zm19 0h1v1h-1zm20 0h1v1h-1zm20 0h1v1h-1zm20 0h1v1h-1zm19 0h1v1h-1zm20 0h1v1h-1zm20 0h1v1h-1zm20 0h1v1h-1zm20 0h1v1h-1zm19 0h1v1h-1zm20 0h1v1h-1zm20 0h1v1h-1zm20 0h1v1h-1zm20 0h1v1h-1zm19 0h1v1h-1zm20 0h1v1h-1zm20 0h1v1h-1zm20 0h1v1h-1zm19 0h1v1h-1zm20 0h1v1h-1zm20 0h1v1h-1zm20 0h1v1h-1zm20 0h1v1h-1zm19 0h1v1h-1zm20 0h1v1h-1zm20 0h1v1h-1zm20 0h1v1h-1zM24 542h1v1h-1zm20 0h1v1h-1zm20 0h1v1h-1zm20 0h1v1h-1zm19 0h1v1h-1zm20 0h1v1h-1zm20 0h1v1h-1zm20 0h1v1h-1zm20 0h1v1h-1zm19 0h1v1h-1zm20 0h1v1h-1zm20 0h1v1h-1zm20 0h1v1h-1zm19 0h1v1h-1zm20 0h1v1h-1zm20 0h1v1h-1zm20 0h1v1h-1zm20 0h1v1h-1zm19 0h1v1h-1zm20 0h1v1h-1zm20 0h1v1h-1zm20 0h1v1h-1zm19 0h1v1h-1zm20 0h1v1h-1zm20 0h1v1h-1zm20 0h1v1h-1zm20 0h1v1h-1zm19 0h1v1h-1zm20 0h1v1h-1zm20 0h1v1h-1zm20 0h1v1h-1zm19 0h1v1h-1zm20 0h1v1h-1zm20 0h1v1h-1zm20 0h1v1h-1zm20 0h1v1h-1zm19 0h1v1h-1zm20 0h1v1h-1zm20 0h1v1h-1zm20 0h1v1h-1zm19 0h1v1h-1zm20 0h1v1h-1zm20 0h1v1h-1zm20 0h1v1h-1zm20 0h1v1h-1zm19 0h1v1h-1zm20 0h1v1h-1zm20 0h1v1h-1zm20 0h1v1h-1zm20 0h1v1h-1zm19 0h1v1h-1zm20 0h1v1h-1zm20 0h1v1h-1zm20 0h1v1h-1zm19 0h1v1h-1zm20 0h1v1h-1zm20 0h1v1h-1zm20 0h1v1h-1zm20 0h1v1h-1zm19 0h1v1h-1zm20 0h1v1h-1zm20 0h1v1h-1zm20 0h1v1h-1zM24 562h1v1h-1zm20 0h1v1h-1zm20 0h1v1h-1zm20 0h1v1h-1zm19 0h1v1h-1zm20 0h1v1h-1zm20 0h1v1h-1zm20 0h1v1h-1zm20 0h1v1h-1zm19 0h1v1h-1zm20 0h1v1h-1zm20 0h1v1h-1zm20 0h1v1h-1zm19 0h1v1h-1zm20 0h1v1h-1zm20 0h1v1h-1zm20 0h1v1h-1zm20 0h1v1h-1zm19 0h1v1h-1zm20 0h1v1h-1zm20 0h1v1h-1zm20 0h1v1h-1zm19 0h1v1h-1zm20 0h1v1h-1zm20 0h1v1h-1zm20 0h1v1h-1zm20 0h1v1h-1zm19 0h1v1h-1zm20 0h1v1h-1zm20 0h1v1h-1zm20 0h1v1h-1zm19 0h1v1h-1zm20 0h1v1h-1zm20 0h1v1h-1zm20 0h1v1h-1zm20 0h1v1h-1zm19 0h1v1h-1zm20 0h1v1h-1zm20 0h1v1h-1zm20 0h1v1h-1zm19 0h1v1h-1zm20 0h1v1h-1zm20 0h1v1h-1zm20 0h1v1h-1zm20 0h1v1h-1zm19 0h1v1h-1zm20 0h1v1h-1zm20 0h1v1h-1zm20 0h1v1h-1zm20 0h1v1h-1zm19 0h1v1h-1zm20 0h1v1h-1zm20 0h1v1h-1zm20 0h1v1h-1zm19 0h1v1h-1zm20 0h1v1h-1zm20 0h1v1h-1zm20 0h1v1h-1zm20 0h1v1h-1zm19 0h1v1h-1zm20 0h1v1h-1zm20 0h1v1h-1zm20 0h1v1h-1zM24 582h1v1h-1zm20 0h1v1h-1zm20 0h1v1h-1zm20 0h1v1h-1zm19 0h1v1h-1zm20 0h1v1h-1zm20 0h1v1h-1zm20 0h1v1h-1zm20 0h1v1h-1zm19 0h1v1h-1zm20 0h1v1h-1zm20 0h1v1h-1zm20 0h1v1h-1zm19 0h1v1h-1zm20 0h1v1h-1zm20 0h1v1h-1zm20 0h1v1h-1zm20 0h1v1h-1zm19 0h1v1h-1zm20 0h1v1h-1zm20 0h1v1h-1zm20 0h1v1h-1zm19 0h1v1h-1zm20 0h1v1h-1zm20 0h1v1h-1zm20 0h1v1h-1zm20 0h1v1h-1zm19 0h1v1h-1zm20 0h1v1h-1zm20 0h1v1h-1zm20 0h1v1h-1zm19 0h1v1h-1zm20 0h1v1h-1zm20 0h1v1h-1zm20 0h1v1h-1zm20 0h1v1h-1zm19 0h1v1h-1zm20 0h1v1h-1zm20 0h1v1h-1zm20 0h1v1h-1zm19 0h1v1h-1zm20 0h1v1h-1zm20 0h1v1h-1zm20 0h1v1h-1zm20 0h1v1h-1zm19 0h1v1h-1zm20 0h1v1h-1zm20 0h1v1h-1zm20 0h1v1h-1zm20 0h1v1h-1zm19 0h1v1h-1zm20 0h1v1h-1zm20 0h1v1h-1zm20 0h1v1h-1zm19 0h1v1h-1zm20 0h1v1h-1zm20 0h1v1h-1zm20 0h1v1h-1zm20 0h1v1h-1zm19 0h1v1h-1zm20 0h1v1h-1zm20 0h1v1h-1zm20 0h1v1h-1zM24 602h1v1h-1zm20 0h1v1h-1zm20 0h1v1h-1zm20 0h1v1h-1zm19 0h1v1h-1zm20 0h1v1h-1zm20 0h1v1h-1zm20 0h1v1h-1zm20 0h1v1h-1zm19 0h1v1h-1zm20 0h1v1h-1zm20 0h1v1h-1zm20 0h1v1h-1zm19 0h1v1h-1zm20 0h1v1h-1zm20 0h1v1h-1zm20 0h1v1h-1zm20 0h1v1h-1zm19 0h1v1h-1zm20 0h1v1h-1zm20 0h1v1h-1zm20 0h1v1h-1zm19 0h1v1h-1zm20 0h1v1h-1zm20 0h1v1h-1zm20 0h1v1h-1zm20 0h1v1h-1zm19 0h1v1h-1zm20 0h1v1h-1zm20 0h1v1h-1zm20 0h1v1h-1zm19 0h1v1h-1zm20 0h1v1h-1zm20 0h1v1h-1zm20 0h1v1h-1zm20 0h1v1h-1zm19 0h1v1h-1zm20 0h1v1h-1zm20 0h1v1h-1zm20 0h1v1h-1zm19 0h1v1h-1zm20 0h1v1h-1zm20 0h1v1h-1zm20 0h1v1h-1zm20 0h1v1h-1zm19 0h1v1h-1zm20 0h1v1h-1zm20 0h1v1h-1zm20 0h1v1h-1zm20 0h1v1h-1zm19 0h1v1h-1zm20 0h1v1h-1zm20 0h1v1h-1zm20 0h1v1h-1zm19 0h1v1h-1zm20 0h1v1h-1zm20 0h1v1h-1zm20 0h1v1h-1zm20 0h1v1h-1zm19 0h1v1h-1zm20 0h1v1h-1zm20 0h1v1h-1zm20 0h1v1h-1zM24 621h1v1h-1zm20 0h1v1h-1zm20 0h1v1h-1zm20 0h1v1h-1zm19 0h1v1h-1zm20 0h1v1h-1zm20 0h1v1h-1zm20 0h1v1h-1zm20 0h1v1h-1zm19 0h1v1h-1zm20 0h1v1h-1zm20 0h1v1h-1zm20 0h1v1h-1zm19 0h1v1h-1zm20 0h1v1h-1zm20 0h1v1h-1zm20 0h1v1h-1zm20 0h1v1h-1zm19 0h1v1h-1zm20 0h1v1h-1zm20 0h1v1h-1zm20 0h1v1h-1zm19 0h1v1h-1zm20 0h1v1h-1zm20 0h1v1h-1zm20 0h1v1h-1zm20 0h1v1h-1zm19 0h1v1h-1zm20 0h1v1h-1zm20 0h1v1h-1zm20 0h1v1h-1zm19 0h1v1h-1zm20 0h1v1h-1zm20 0h1v1h-1zm20 0h1v1h-1zm20 0h1v1h-1zm19 0h1v1h-1zm20 0h1v1h-1zm20 0h1v1h-1zm20 0h1v1h-1zm19 0h1v1h-1zm20 0h1v1h-1zm20 0h1v1h-1zm20 0h1v1h-1zm20 0h1v1h-1zm19 0h1v1h-1zm20 0h1v1h-1zm20 0h1v1h-1zm20 0h1v1h-1zm20 0h1v1h-1zm19 0h1v1h-1zm20 0h1v1h-1zm20 0h1v1h-1zm20 0h1v1h-1zm19 0h1v1h-1zm20 0h1v1h-1zm20 0h1v1h-1zm20 0h1v1h-1zm20 0h1v1h-1zm19 0h1v1h-1zm20 0h1v1h-1zm20 0h1v1h-1zm20 0h1v1h-1zM24 641h1v1h-1zm20 0h1v1h-1zm20 0h1v1h-1zm20 0h1v1h-1zm19 0h1v1h-1zm20 0h1v1h-1zm20 0h1v1h-1zm20 0h1v1h-1zm20 0h1v1h-1zm19 0h1v1h-1zm20 0h1v1h-1zm20 0h1v1h-1zm20 0h1v1h-1zm19 0h1v1h-1zm20 0h1v1h-1zm20 0h1v1h-1zm20 0h1v1h-1zm20 0h1v1h-1zm19 0h1v1h-1zm20 0h1v1h-1zm20 0h1v1h-1zm20 0h1v1h-1zm19 0h1v1h-1zm20 0h1v1h-1zm20 0h1v1h-1zm20 0h1v1h-1zm20 0h1v1h-1zm19 0h1v1h-1zm20 0h1v1h-1zm20 0h1v1h-1zm20 0h1v1h-1zm19 0h1v1h-1zm20 0h1v1h-1zm20 0h1v1h-1zm20 0h1v1h-1zm20 0h1v1h-1zm19 0h1v1h-1zm20 0h1v1h-1zm20 0h1v1h-1zm20 0h1v1h-1zm19 0h1v1h-1zm20 0h1v1h-1zm20 0h1v1h-1zm20 0h1v1h-1zm20 0h1v1h-1zm19 0h1v1h-1zm20 0h1v1h-1zm20 0h1v1h-1zm20 0h1v1h-1zm20 0h1v1h-1zm19 0h1v1h-1zm20 0h1v1h-1zm20 0h1v1h-1zm20 0h1v1h-1zm19 0h1v1h-1zm20 0h1v1h-1zm20 0h1v1h-1zm20 0h1v1h-1zm20 0h1v1h-1zm19 0h1v1h-1zm20 0h1v1h-1zm20 0h1v1h-1zm20 0h1v1h-1zM24 661h1v1h-1zm20 0h1v1h-1zm20 0h1v1h-1zm20 0h1v1h-1zm19 0h1v1h-1zm20 0h1v1h-1zm20 0h1v1h-1zm20 0h1v1h-1zm20 0h1v1h-1zm19 0h1v1h-1zm20 0h1v1h-1zm20 0h1v1h-1zm20 0h1v1h-1zm19 0h1v1h-1zm20 0h1v1h-1zm20 0h1v1h-1zm20 0h1v1h-1zm20 0h1v1h-1zm19 0h1v1h-1zm20 0h1v1h-1zm20 0h1v1h-1zm20 0h1v1h-1zm19 0h1v1h-1zm20 0h1v1h-1zm20 0h1v1h-1zm20 0h1v1h-1zm20 0h1v1h-1zm19 0h1v1h-1zm20 0h1v1h-1zm20 0h1v1h-1zm20 0h1v1h-1zm19 0h1v1h-1zm20 0h1v1h-1zm20 0h1v1h-1zm20 0h1v1h-1zm20 0h1v1h-1zm19 0h1v1h-1zm20 0h1v1h-1zm20 0h1v1h-1zm20 0h1v1h-1zm19 0h1v1h-1zm20 0h1v1h-1zm20 0h1v1h-1zm20 0h1v1h-1zm20 0h1v1h-1zm19 0h1v1h-1zm20 0h1v1h-1zm20 0h1v1h-1zm20 0h1v1h-1zm20 0h1v1h-1zm19 0h1v1h-1zm20 0h1v1h-1zm20 0h1v1h-1zm20 0h1v1h-1zm19 0h1v1h-1zm20 0h1v1h-1zm20 0h1v1h-1zm20 0h1v1h-1zm20 0h1v1h-1zm19 0h1v1h-1zm20 0h1v1h-1zm20 0h1v1h-1zm20 0h1v1h-1zM24 681h1v1h-1zm20 0h1v1h-1zm20 0h1v1h-1zm20 0h1v1h-1zm19 0h1v1h-1zm20 0h1v1h-1zm20 0h1v1h-1zm20 0h1v1h-1zm20 0h1v1h-1zm19 0h1v1h-1zm20 0h1v1h-1zm20 0h1v1h-1zm20 0h1v1h-1zm19 0h1v1h-1zm20 0h1v1h-1zm20 0h1v1h-1zm20 0h1v1h-1zm20 0h1v1h-1zm19 0h1v1h-1zm20 0h1v1h-1zm20 0h1v1h-1zm20 0h1v1h-1zm19 0h1v1h-1zm20 0h1v1h-1zm20 0h1v1h-1zm20 0h1v1h-1zm20 0h1v1h-1zm19 0h1v1h-1zm20 0h1v1h-1zm20 0h1v1h-1zm20 0h1v1h-1zm19 0h1v1h-1zm20 0h1v1h-1zm20 0h1v1h-1zm20 0h1v1h-1zm20 0h1v1h-1zm19 0h1v1h-1zm20 0h1v1h-1zm20 0h1v1h-1zm20 0h1v1h-1zm19 0h1v1h-1zm20 0h1v1h-1zm20 0h1v1h-1zm20 0h1v1h-1zm20 0h1v1h-1zm19 0h1v1h-1zm20 0h1v1h-1zm20 0h1v1h-1zm20 0h1v1h-1zm20 0h1v1h-1zm19 0h1v1h-1zm20 0h1v1h-1zm20 0h1v1h-1zm20 0h1v1h-1zm19 0h1v1h-1zm20 0h1v1h-1zm20 0h1v1h-1zm20 0h1v1h-1zm20 0h1v1h-1zm19 0h1v1h-1zm20 0h1v1h-1zm20 0h1v1h-1zm20 0h1v1h-1zM24 700h1v1h-1zm20 0h1v1h-1zm20 0h1v1h-1zm20 0h1v1h-1zm19 0h1v1h-1zm20 0h1v1h-1zm20 0h1v1h-1zm20 0h1v1h-1zm20 0h1v1h-1zm19 0h1v1h-1zm20 0h1v1h-1zm20 0h1v1h-1zm20 0h1v1h-1zm19 0h1v1h-1zm20 0h1v1h-1zm20 0h1v1h-1zm20 0h1v1h-1zm20 0h1v1h-1zm19 0h1v1h-1zm20 0h1v1h-1zm20 0h1v1h-1zm20 0h1v1h-1zm19 0h1v1h-1zm20 0h1v1h-1zm20 0h1v1h-1zm20 0h1v1h-1zm20 0h1v1h-1zm19 0h1v1h-1zm20 0h1v1h-1zm20 0h1v1h-1zm20 0h1v1h-1zm19 0h1v1h-1zm20 0h1v1h-1zm20 0h1v1h-1zm20 0h1v1h-1zm20 0h1v1h-1zm19 0h1v1h-1zm20 0h1v1h-1zm20 0h1v1h-1zm20 0h1v1h-1zm19 0h1v1h-1zm20 0h1v1h-1zm20 0h1v1h-1zm20 0h1v1h-1zm20 0h1v1h-1zm19 0h1v1h-1zm20 0h1v1h-1zm20 0h1v1h-1zm20 0h1v1h-1zm20 0h1v1h-1zm19 0h1v1h-1zm20 0h1v1h-1zm20 0h1v1h-1zm20 0h1v1h-1zm19 0h1v1h-1zm20 0h1v1h-1zm20 0h1v1h-1zm20 0h1v1h-1zm20 0h1v1h-1zm19 0h1v1h-1zm20 0h1v1h-1zm20 0h1v1h-1zm20 0h1v1h-1zM24 720h1v1h-1zm20 0h1v1h-1zm20 0h1v1h-1zm20 0h1v1h-1zm19 0h1v1h-1zm20 0h1v1h-1zm20 0h1v1h-1zm20 0h1v1h-1zm20 0h1v1h-1zm19 0h1v1h-1zm20 0h1v1h-1zm20 0h1v1h-1zm20 0h1v1h-1zm19 0h1v1h-1zm20 0h1v1h-1zm20 0h1v1h-1zm20 0h1v1h-1zm20 0h1v1h-1zm19 0h1v1h-1zm20 0h1v1h-1zm20 0h1v1h-1zm20 0h1v1h-1zm19 0h1v1h-1zm20 0h1v1h-1zm20 0h1v1h-1zm20 0h1v1h-1zm20 0h1v1h-1zm19 0h1v1h-1zm20 0h1v1h-1zm20 0h1v1h-1zm20 0h1v1h-1zm19 0h1v1h-1zm20 0h1v1h-1zm20 0h1v1h-1zm20 0h1v1h-1zm20 0h1v1h-1zm19 0h1v1h-1zm20 0h1v1h-1zm20 0h1v1h-1zm20 0h1v1h-1zm19 0h1v1h-1zm20 0h1v1h-1zm20 0h1v1h-1zm20 0h1v1h-1zm20 0h1v1h-1zm19 0h1v1h-1zm20 0h1v1h-1zm20 0h1v1h-1zm20 0h1v1h-1zm20 0h1v1h-1zm19 0h1v1h-1zm20 0h1v1h-1zm20 0h1v1h-1zm20 0h1v1h-1zm19 0h1v1h-1zm20 0h1v1h-1zm20 0h1v1h-1zm20 0h1v1h-1zm20 0h1v1h-1zm19 0h1v1h-1zm20 0h1v1h-1zm20 0h1v1h-1zm20 0h1v1h-1zM24 740h1v1h-1zm20 0h1v1h-1zm20 0h1v1h-1zm20 0h1v1h-1zm19 0h1v1h-1zm20 0h1v1h-1zm20 0h1v1h-1zm20 0h1v1h-1zm20 0h1v1h-1zm19 0h1v1h-1zm20 0h1v1h-1zm20 0h1v1h-1zm20 0h1v1h-1zm19 0h1v1h-1zm20 0h1v1h-1zm20 0h1v1h-1zm20 0h1v1h-1zm20 0h1v1h-1zm19 0h1v1h-1zm20 0h1v1h-1zm20 0h1v1h-1zm20 0h1v1h-1zm19 0h1v1h-1zm20 0h1v1h-1zm20 0h1v1h-1zm20 0h1v1h-1zm20 0h1v1h-1zm19 0h1v1h-1zm20 0h1v1h-1zm20 0h1v1h-1zm20 0h1v1h-1zm19 0h1v1h-1zm20 0h1v1h-1zm20 0h1v1h-1zm20 0h1v1h-1zm20 0h1v1h-1zm19 0h1v1h-1zm20 0h1v1h-1zm20 0h1v1h-1zm20 0h1v1h-1zm19 0h1v1h-1zm20 0h1v1h-1zm20 0h1v1h-1zm20 0h1v1h-1zm20 0h1v1h-1zm19 0h1v1h-1zm20 0h1v1h-1zm20 0h1v1h-1zm20 0h1v1h-1zm20 0h1v1h-1zm19 0h1v1h-1zm20 0h1v1h-1zm20 0h1v1h-1zm20 0h1v1h-1zm19 0h1v1h-1zm20 0h1v1h-1zm20 0h1v1h-1zm20 0h1v1h-1zm20 0h1v1h-1zm19 0h1v1h-1zm20 0h1v1h-1zm20 0h1v1h-1zm20 0h1v1h-1zM24 760h1v1h-1zm20 0h1v1h-1zm20 0h1v1h-1zm20 0h1v1h-1zm19 0h1v1h-1zm20 0h1v1h-1zm20 0h1v1h-1zm20 0h1v1h-1zm20 0h1v1h-1zm19 0h1v1h-1zm20 0h1v1h-1zm20 0h1v1h-1zm20 0h1v1h-1zm19 0h1v1h-1zm20 0h1v1h-1zm20 0h1v1h-1zm20 0h1v1h-1zm20 0h1v1h-1zm19 0h1v1h-1zm20 0h1v1h-1zm20 0h1v1h-1zm20 0h1v1h-1zm19 0h1v1h-1zm20 0h1v1h-1zm20 0h1v1h-1zm20 0h1v1h-1zm20 0h1v1h-1zm19 0h1v1h-1zm20 0h1v1h-1zm20 0h1v1h-1zm20 0h1v1h-1zm19 0h1v1h-1zm20 0h1v1h-1zm20 0h1v1h-1zm20 0h1v1h-1zm20 0h1v1h-1zm19 0h1v1h-1zm20 0h1v1h-1zm20 0h1v1h-1zm20 0h1v1h-1zm19 0h1v1h-1zm20 0h1v1h-1zm20 0h1v1h-1zm20 0h1v1h-1zm20 0h1v1h-1zm19 0h1v1h-1zm20 0h1v1h-1zm20 0h1v1h-1zm20 0h1v1h-1zm20 0h1v1h-1zm19 0h1v1h-1zm20 0h1v1h-1zm20 0h1v1h-1zm20 0h1v1h-1zm19 0h1v1h-1zm20 0h1v1h-1zm20 0h1v1h-1zm20 0h1v1h-1zm20 0h1v1h-1zm19 0h1v1h-1zm20 0h1v1h-1zm20 0h1v1h-1zm20 0h1v1h-1zM24 780h1v1h-1zm20 0h1v1h-1zm20 0h1v1h-1zm20 0h1v1h-1zm19 0h1v1h-1zm20 0h1v1h-1zm20 0h1v1h-1zm20 0h1v1h-1zm20 0h1v1h-1zm19 0h1v1h-1zm20 0h1v1h-1zm20 0h1v1h-1zm20 0h1v1h-1zm19 0h1v1h-1zm20 0h1v1h-1zm20 0h1v1h-1zm20 0h1v1h-1zm20 0h1v1h-1zm19 0h1v1h-1zm20 0h1v1h-1zm20 0h1v1h-1zm20 0h1v1h-1zm19 0h1v1h-1zm20 0h1v1h-1zm20 0h1v1h-1zm20 0h1v1h-1zm20 0h1v1h-1zm19 0h1v1h-1zm20 0h1v1h-1zm20 0h1v1h-1zm20 0h1v1h-1zm19 0h1v1h-1zm20 0h1v1h-1zm20 0h1v1h-1zm20 0h1v1h-1zm20 0h1v1h-1zm19 0h1v1h-1zm20 0h1v1h-1zm20 0h1v1h-1zm20 0h1v1h-1zm19 0h1v1h-1zm20 0h1v1h-1zm20 0h1v1h-1zm20 0h1v1h-1zm20 0h1v1h-1zm19 0h1v1h-1zm20 0h1v1h-1zm20 0h1v1h-1zm20 0h1v1h-1zm20 0h1v1h-1zm19 0h1v1h-1zm20 0h1v1h-1zm20 0h1v1h-1zm20 0h1v1h-1zm19 0h1v1h-1zm20 0h1v1h-1zm20 0h1v1h-1zm20 0h1v1h-1zm20 0h1v1h-1zm19 0h1v1h-1zm20 0h1v1h-1zm20 0h1v1h-1zm20 0h1v1h-1zM24 799h1v1h-1zm20 0h1v1h-1zm20 0h1v1h-1zm20 0h1v1h-1zm19 0h1v1h-1zm20 0h1v1h-1zm20 0h1v1h-1zm20 0h1v1h-1zm20 0h1v1h-1zm19 0h1v1h-1zm20 0h1v1h-1zm20 0h1v1h-1zm20 0h1v1h-1zm19 0h1v1h-1zm20 0h1v1h-1zm20 0h1v1h-1zm20 0h1v1h-1zm20 0h1v1h-1zm19 0h1v1h-1zm20 0h1v1h-1zm20 0h1v1h-1zm20 0h1v1h-1zm19 0h1v1h-1zm20 0h1v1h-1zm20 0h1v1h-1zm20 0h1v1h-1zm20 0h1v1h-1zm19 0h1v1h-1zm20 0h1v1h-1zm20 0h1v1h-1zm20 0h1v1h-1zm19 0h1v1h-1zm20 0h1v1h-1zm20 0h1v1h-1zm20 0h1v1h-1zm20 0h1v1h-1zm19 0h1v1h-1zm20 0h1v1h-1zm20 0h1v1h-1zm20 0h1v1h-1zm19 0h1v1h-1zm20 0h1v1h-1zm20 0h1v1h-1zm20 0h1v1h-1zm20 0h1v1h-1zm19 0h1v1h-1zm20 0h1v1h-1zm20 0h1v1h-1zm20 0h1v1h-1zm20 0h1v1h-1zm19 0h1v1h-1zm20 0h1v1h-1zm20 0h1v1h-1zm20 0h1v1h-1zm19 0h1v1h-1zm20 0h1v1h-1zm20 0h1v1h-1zm20 0h1v1h-1zm20 0h1v1h-1zm19 0h1v1h-1zm20 0h1v1h-1zm20 0h1v1h-1zm20 0h1v1h-1zM24 819h1v1h-1zm20 0h1v1h-1zm20 0h1v1h-1zm20 0h1v1h-1zm19 0h1v1h-1zm20 0h1v1h-1zm20 0h1v1h-1zm20 0h1v1h-1zm20 0h1v1h-1zm19 0h1v1h-1zm20 0h1v1h-1zm20 0h1v1h-1zm20 0h1v1h-1zm19 0h1v1h-1zm20 0h1v1h-1zm20 0h1v1h-1zm20 0h1v1h-1zm20 0h1v1h-1zm19 0h1v1h-1zm20 0h1v1h-1zm20 0h1v1h-1zm20 0h1v1h-1zm19 0h1v1h-1zm20 0h1v1h-1zm20 0h1v1h-1zm20 0h1v1h-1zm20 0h1v1h-1zm19 0h1v1h-1zm20 0h1v1h-1zm20 0h1v1h-1zm20 0h1v1h-1zm19 0h1v1h-1zm20 0h1v1h-1zm20 0h1v1h-1zm20 0h1v1h-1zm20 0h1v1h-1zm19 0h1v1h-1zm20 0h1v1h-1zm20 0h1v1h-1zm20 0h1v1h-1zm19 0h1v1h-1zm20 0h1v1h-1zm20 0h1v1h-1zm20 0h1v1h-1zm20 0h1v1h-1zm19 0h1v1h-1zm20 0h1v1h-1zm20 0h1v1h-1zm20 0h1v1h-1zm20 0h1v1h-1zm19 0h1v1h-1zm20 0h1v1h-1zm20 0h1v1h-1zm20 0h1v1h-1zm19 0h1v1h-1zm20 0h1v1h-1zm20 0h1v1h-1zm20 0h1v1h-1zm20 0h1v1h-1zm19 0h1v1h-1zm20 0h1v1h-1zm20 0h1v1h-1zm20 0h1v1h-1zM24 839h1v1h-1zm20 0h1v1h-1zm20 0h1v1h-1zm20 0h1v1h-1zm19 0h1v1h-1zm20 0h1v1h-1zm20 0h1v1h-1zm20 0h1v1h-1zm20 0h1v1h-1zm19 0h1v1h-1zm20 0h1v1h-1zm20 0h1v1h-1zm20 0h1v1h-1zm19 0h1v1h-1zm20 0h1v1h-1zm20 0h1v1h-1zm20 0h1v1h-1zm20 0h1v1h-1zm19 0h1v1h-1zm20 0h1v1h-1zm20 0h1v1h-1zm20 0h1v1h-1zm19 0h1v1h-1zm20 0h1v1h-1zm20 0h1v1h-1zm20 0h1v1h-1zm20 0h1v1h-1zm19 0h1v1h-1zm20 0h1v1h-1zm20 0h1v1h-1zm20 0h1v1h-1zm19 0h1v1h-1zm20 0h1v1h-1zm20 0h1v1h-1zm20 0h1v1h-1zm20 0h1v1h-1zm19 0h1v1h-1zm20 0h1v1h-1zm20 0h1v1h-1zm20 0h1v1h-1zm19 0h1v1h-1zm20 0h1v1h-1zm20 0h1v1h-1zm20 0h1v1h-1zm20 0h1v1h-1zm19 0h1v1h-1zm20 0h1v1h-1zm20 0h1v1h-1zm20 0h1v1h-1zm20 0h1v1h-1zm19 0h1v1h-1zm20 0h1v1h-1zm20 0h1v1h-1zm20 0h1v1h-1zm19 0h1v1h-1zm20 0h1v1h-1zm20 0h1v1h-1zm20 0h1v1h-1zm20 0h1v1h-1zm19 0h1v1h-1zm20 0h1v1h-1zm20 0h1v1h-1zm20 0h1v1h-1zM24 859h1v1h-1zm20 0h1v1h-1zm20 0h1v1h-1zm20 0h1v1h-1zm19 0h1v1h-1zm20 0h1v1h-1zm20 0h1v1h-1zm20 0h1v1h-1zm20 0h1v1h-1zm19 0h1v1h-1zm20 0h1v1h-1zm20 0h1v1h-1zm20 0h1v1h-1zm19 0h1v1h-1zm20 0h1v1h-1zm20 0h1v1h-1zm20 0h1v1h-1zm20 0h1v1h-1zm19 0h1v1h-1zm20 0h1v1h-1zm20 0h1v1h-1zm20 0h1v1h-1zm19 0h1v1h-1zm20 0h1v1h-1zm20 0h1v1h-1zm20 0h1v1h-1zm20 0h1v1h-1zm19 0h1v1h-1zm20 0h1v1h-1zm20 0h1v1h-1zm20 0h1v1h-1zm19 0h1v1h-1zm20 0h1v1h-1zm20 0h1v1h-1zm20 0h1v1h-1zm20 0h1v1h-1zm19 0h1v1h-1zm20 0h1v1h-1zm20 0h1v1h-1zm20 0h1v1h-1zm19 0h1v1h-1zm20 0h1v1h-1zm20 0h1v1h-1zm20 0h1v1h-1zm20 0h1v1h-1zm19 0h1v1h-1zm20 0h1v1h-1zm20 0h1v1h-1zm20 0h1v1h-1zm20 0h1v1h-1zm19 0h1v1h-1zm20 0h1v1h-1zm20 0h1v1h-1zm20 0h1v1h-1zm19 0h1v1h-1zm20 0h1v1h-1zm20 0h1v1h-1zm20 0h1v1h-1zm20 0h1v1h-1zm19 0h1v1h-1zm20 0h1v1h-1zm20 0h1v1h-1zm20 0h1v1h-1z" fill="#6e6e6e" shape-rendering="crispEdges"/>
<path id="wires" d="M34.5 156.78 L34.5 162.4M34.5 200.6 L34.5 206.22M34.5 171.61 L34.5 191.39M34.5 245.78 L34.5 251.4M34.5 289.6 L34.5 295.23M34.5 260.61 L34.5 280.39M34.5 334.77 L34.5 340.4M34.5 378.6 L34.5 384.23M34.5 349.61 L34.5 369.39M29.55 525.5 L39.45 525.5M34.5 520.55 L34.5 530.45M29.55 550.5 L39.45 550.5M34.5 518.9 L34.5 483.5 L74.5 483.5M34.5 557.1 L34.5 592.5M450.5 156.5 L450.5 592.5M472.5 151.56 L472.5 161.44M496.5 151.56 L496.5 161.44M491.56 156.5 L501.44 156.5M450.5 156.5 L465.4 156.5M503.6 156.5 L548.5 156.5M472.5 240.56 L472.5 250.44M496.5 240.56 L496.5 250.44M491.56 245.5 L501.44 245.5M450.5 245.5 L465.4 245.5M503.6 245.5 L548.5 245.5M472.5 320.56 L472.5 330.44M496.5 320.56 L496.5 330.44M491.56 325.5 L501.44 325.5M450.5 325.5 L465.4 325.5M503.6 325.5 L548.5 325.5M511.5 517.55 L511.5 527.45M536.5 517.55 L536.5 527.45M531.55 522.5 L541.45 522.5M450.5 522.5 L504.9 522.5M586.5 512.61 L586.5 532.39M591.5 512.61 L591.5 532.39M543.1 522.5 L586.5 522.5M591.5 522.5 L672.45 522.5M712 522.5 L749.5 522.5M754 522.5 L759.5 522.5M764 522.5 L769.5 522.5M774 522.5 L779.5 522.5M784 522.5 L789 522.5M754.5 513.5h24v2h-24zM766.5 513 L766.5 285.5M751 530.5 L782 530.5M746.5 536 L746.5 634.5M637.5 522.5 L637.5 577.45M637.5 617 L637.5 671.5 L746.5 671.5M735.5 582.5 L746.5 582.5M735.5 602.5 L746.5 602.5M736.61 634.5 L756.39 634.5M736.61 649.5 L756.39 649.5M746.5 649.5 L746.5 700.5M766.5 285.5 L766.5 330.44M766.5 370 L766.5 513M766.5 315.5 L776 315.5M746 463.5 L766.5 463.5M766.5 404.5 L830.45 404.5M870 404.5 L1013.5 404.5M823.5 453.61 L823.5 473.39M828.5 453.61 L828.5 473.39M766.5 463.5 L823.5 463.5M828.5 463.5 L909.45 463.5M949 463.5 L996.5 463.5M885.5 463.5 L885.5 508.44M885.5 548 L885.5 582.5M974.5 463.5 L974.5 513.5 L944.5 513.5 L944.5 559.5M934.61 559.5 L954.39 559.5M934.61 564.5 L954.39 564.5M944.5 564.5 L944.5 621.5M1001.5 443.5h25v3h-25zM991 453.5 L996.5 453.5M1001 453.5 L1006.5 453.5M1011 453.5 L1016.5 453.5M1021 453.5 L1026.5 453.5M1031 453.5 L1162.5 453.5M1001 463.5 L1006.5 463.5M1011 463.5 L1016.5 463.5M1021 463.5 L1026.5 463.5M1031 463.5 L1037 463.5M999 470.5 L1028.5 470.5M994.5 475 L994.5 527.45M994.5 567 L994.5 631.5M994.5 592.5 L1034 592.5M1013.5 310 L1013.5 443M1013.5 325.5 L1162.5 325.5M1013.5 364.5 L1152.5 364.5M1073.5 453.5 L1073.5 423.5 L1152.5 423.5M1073.5 453.5 L1073.5 478.44M1073.5 518 L1073.5 542.5 L1142.5 542.5M1013.5 235.95 L1013.5 270.44M924.5 156.5 L1013.5 156.5 L1013.5 186.5M1063.5 186.5 L1063.5 156.5 L1088.44 156.5M1128.01 156.5 L1162.5 156.5M1142.5 156.5 L1142.5 191.44M1142.5 231 L1142.5 285.5M1063.5 235.95 L1063.5 265.5 L1142.5 265.5" fill="none" stroke="#00ff00" stroke-width="1" shape-rendering="crispEdges"/>
<path id="sym" d="M15.4 181.5a19.1 19.1 0 1 0 38.2 0a19.1 19.1 0 1 0 -38.2 0M32 186 L37 186 L34.5 191.39 L32 186M15.4 270.5a19.1 19.1 0 1 0 38.2 0a19.1 19.1 0 1 0 -38.2 0M32 275 L37 275 L34.5 280.39 L32 275M15.4 359.5a19.1 19.1 0 1 0 38.2 0a19.1 19.1 0 1 0 -38.2 0M32 364 L37 364 L34.5 369.39 L32 364M15.4 538a19.1 19.1 0 1 0 38.2 0a19.1 19.1 0 1 0 -38.2 0M465.4 156.5a19.1 19.1 0 1 0 38.2 0a19.1 19.1 0 1 0 -38.2 0M465.4 245.5a19.1 19.1 0 1 0 38.2 0a19.1 19.1 0 1 0 -38.2 0M465.4 325.5a19.1 19.1 0 1 0 38.2 0a19.1 19.1 0 1 0 -38.2 0M504.9 522.5a19.1 19.1 0 1 0 38.2 0a19.1 19.1 0 1 0 -38.2 0M672.45 522.5 L677.39 512.61 L687.28 532.39 L697.17 512.61 L707.06 532.39 L712 522.5M736.6 522.5a29.6 29.6 0 1 0 59.2 0a29.6 29.6 0 1 0 -59.2 0M746.5 536 L750.5 532.5 L782 532.5 L787 536.5M746.5 536 L751 530.5M782 530.5 L787 536.5M637.5 577.45 L647.39 582.39 L627.61 592.28 L647.39 602.17 L627.61 612.06 L637.5 617M736.61 634.5 L746.5 649.5 L756.39 634.5M762.5 636.5 v-1 l1 -1 h6.5 l1.5 1.5 v4 l3.5 3.5 h4.5 M776 641.4 h6 l-3.5 5.2M762.5 646.5 v-1 l1 -1 h6.5 l1.5 1.5 v4 l3.5 3.5 h4.5 M776 651.4 h6 l-3.5 5.2M766.5 330.44 L776.39 335.39 L756.61 345.28 L776.39 355.17 L756.61 365.06 L766.5 370M830.45 404.5 L835.39 394.61 L845.28 414.39 L855.17 394.61 L865.06 414.39 L870 404.5M909.45 463.5 L914.39 453.61 L924.28 473.39 L934.17 453.61 L944.06 473.39 L949 463.5M885.5 508.44 L895.39 513.39 L875.61 523.28 L895.39 533.17 L875.61 543.06 L885.5 548M984 453.6 a29.8 29.8 0 0 1 59.6 0 v10 a29.8 29.8 0 0 1 -59.6 0zM994.5 475 L997 472.5 L1030.5 472.5 L1033.5 475.5M994.5 475 L999 470.5M1028.5 470.5 L1033.5 475.5M994.5 527.45 L1004.39 532.39 L984.61 542.28 L1004.39 552.17 L984.61 562.06 L994.5 567M1013.5 270.44 L1023.39 275.39 L1003.61 285.28 L1023.39 295.17 L1003.61 305.06 L1013.5 310M1073.5 478.44 L1083.39 483.39 L1063.61 493.28 L1083.39 503.17 L1063.61 513.06 L1073.5 518M1013.5 186.5 A9.89 9.89 0 1 1 1006.51 203.38M1006.51 204.23 A9.89 9.89 0 1 1 1006.51 218.22M1006.51 219.07 A9.89 9.89 0 1 1 1013.5 235.95M1063.5 186.5 A9.89 9.89 0 1 1 1056.51 203.38M1056.51 204.23 A9.89 9.89 0 1 1 1056.51 218.22M1056.51 219.07 A9.89 9.89 0 1 1 1063.5 235.95M1088.44 156.5 L1093.39 146.61 L1103.28 166.39 L1113.17 146.61 L1123.06 166.39 L1128.01 156.5M1142.5 191.44 L1152.39 196.39 L1132.61 206.28 L1152.39 216.17 L1132.61 226.06 L1142.5 231M1010.8 228.5a2.4 2.4 0 1 0 -4.8 0a2.4 2.4 0 1 0 4.8 0M1059.8 193.5a2.4 2.4 0 1 0 -4.8 0a2.4 2.4 0 1 0 4.8 0" fill="none" stroke="#00ff00" stroke-width="1.15" stroke-linejoin="round"/>
<path id="core" d="M1033.5 186v51M1043.5 186v51" stroke="#0000ff" stroke-width="1.2" fill="none"/>
<path d="M1032.5 185.5h2v1.5h-2zM1042.5 185.5h2v1.5h-2zM1032.5 236h2v1.5h-2zM1042.5 236h2v1.5h-2z" fill="#ff0000"/>
<path id="junc" d="M448 243h5v5h-5zM448 323h5v5h-5zM448 520h5v5h-5zM635 520h5v5h-5zM744 580h5v5h-5zM744 600h5v5h-5zM744 669h5v5h-5zM764 313h5v5h-5zM764 402h5v5h-5zM764 461h5v5h-5zM883 461h5v5h-5zM972 461h5v5h-5zM992 590h5v5h-5zM1011 323h5v5h-5zM1011 362h5v5h-5zM1011 402h5v5h-5zM1071 451h5v5h-5zM1140 154h5v5h-5zM1140 263h5v5h-5z" fill="#00ff00" shape-rendering="crispEdges"/>
<path id="red" d="M23.5 156.5 L45.5 156.5 L34.5 145 L23.5 156.5M23.5 206.5 L45.5 206.5 L34.5 218 L23.5 206.5M23.5 245.5 L45.5 245.5 L34.5 234 L23.5 245.5M23.5 295.5 L45.5 295.5 L34.5 307 L23.5 295.5M23.5 334.5 L45.5 334.5 L34.5 323 L23.5 334.5M23.5 384.5 L45.5 384.5 L34.5 396 L23.5 384.5M23.5 592.5 L45.5 592.5 L34.5 604 L23.5 592.5M439.5 592.5 L461.5 592.5 L450.5 604 L439.5 592.5M735.5 700.5 L757.5 700.5 L746.5 712 L735.5 700.5M766.5 285.5 L758.5 276.5 L758.5 242.5 L775.5 242.5 L775.5 276.5 L766.5 285.5M885.5 582.5 L893.5 590.5 L893.5 630.5 L876.5 630.5 L876.5 590.5 L885.5 582.5M936.5 621.5 L953.5 621.5 L953.5 717.5 L944.5 726.5 L936.5 717.5 L936.5 621.5M983.5 631.5 L1005.5 631.5 L994.5 643 L983.5 631.5M1142.5 542.5 L1151.5 534.5 L1184.5 534.5 L1184.5 551.5 L1151.5 551.5 L1142.5 542.5M1131.5 285.5 L1153.5 285.5 L1142.5 297 L1131.5 285.5M548.5 148.5 L572 148.5 L580.5 156.5 L572 165.5 L548.5 165.5 L548.5 148.5M548.5 237.5 L582.2 237.5 L590.6 245.5 L582.2 254.5 L548.5 254.5 L548.5 237.5M548.5 316.5 L588.8 316.5 L597.9 325.5 L588.8 333.5 L548.5 333.5 L548.5 316.5M1162.5 148.5 L1196.7 148.5 L1205 156.5 L1196.7 165.5 L1162.5 165.5 L1162.5 148.5M74.5 474.5 L109.3 474.5 L116.7 483.5 L109.3 491.5 L74.5 491.5 L74.5 474.5M893.5 148.5 L918 148.5 L924.5 156.5 L918 165.5 L893.5 165.5 L893.5 148.5" fill="none" stroke="#ff0000" stroke-width="1.1"/>
<text class="w" x="49.1" y="161.9" textLength="128.2" lengthAdjust="spacingAndGlyphs">POWER_RATING1</text>
<text class="w" x="49.2" y="250.7" textLength="28.7" lengthAdjust="spacingAndGlyphs">VG1</text>
<text class="w" x="49.2" y="339.8" textLength="83" lengthAdjust="spacingAndGlyphs">LOADLINE1</text>
<text class="w" x="49.2" y="519.3" textLength="19.2" lengthAdjust="spacingAndGlyphs">V1</text>
<text class="w" x="49.2" y="568" textLength="37.6" lengthAdjust="spacingAndGlyphs">360V</text>
<text class="w" x="474" y="136.5" textLength="21.4" lengthAdjust="spacingAndGlyphs">VA</text>
<text class="w" x="465.1" y="185.7" textLength="37.8" lengthAdjust="spacingAndGlyphs">{Vq}</text>
<text class="w" x="469.7" y="225.3" textLength="28.9" lengthAdjust="spacingAndGlyphs">Vg2</text>
<text class="w" x="467.1" y="274.8" textLength="35.1" lengthAdjust="spacingAndGlyphs">{sg}</text>
<text class="w" x="460.6" y="362.7" textLength="46.6" lengthAdjust="spacingAndGlyphs">{bias}</text>
<text class="w" x="467.7" y="381.4" textLength="39.6" lengthAdjust="spacingAndGlyphs">VBias</text>
<text class="w" x="505.1" y="492" textLength="37.5" lengthAdjust="spacingAndGlyphs">VgIN</text>
<text class="w" x="461.7" y="567.2" textLength="124.6" lengthAdjust="spacingAndGlyphs">SINE(0 1.23V 1k)</text>
<text class="w" x="498" y="585" textLength="52.9" lengthAdjust="spacingAndGlyphs">AC 50V</text>
<text class="w" x="578.2" y="510" textLength="19.4" lengthAdjust="spacingAndGlyphs">C2</text>
<text class="w" x="570.4" y="545.7" textLength="36.5" lengthAdjust="spacingAndGlyphs">220n</text>
<text class="w" x="683" y="506" textLength="19.4" lengthAdjust="spacingAndGlyphs">R7</text>
<text class="w" x="680.5" y="550.8" textLength="26.9" lengthAdjust="spacingAndGlyphs">10k</text>
<text class="w" x="595.2" y="593" textLength="28.9" lengthAdjust="spacingAndGlyphs">R10</text>
<text class="w" x="589.7" y="614" textLength="35.2" lengthAdjust="spacingAndGlyphs">100k</text>
<text class="c" x="650.7" y="588" textLength="85.6" lengthAdjust="spacingAndGlyphs">2.0375055V</text>
<text class="c" x="632.5" y="608" textLength="104" lengthAdjust="spacingAndGlyphs">-12.541905mA</text>
<text class="w" x="712.3" y="646.6" textLength="18.9" lengthAdjust="spacingAndGlyphs">D1</text>
<text class="w" x="757.7" y="679.4" textLength="101" lengthAdjust="spacingAndGlyphs">TLSV5100RED</text>
<text class="w" x="775" y="562.8" textLength="34.81" lengthAdjust="spacingAndGlyphs" style="font-size:9.3px">ECC88</text>
<text class="w" x="771.08" y="485.7" textLength="8.29" lengthAdjust="spacingAndGlyphs" style="font-size:5.6px">U2</text>
<text class="c" x="776.4" y="320.5" textLength="77.5" lengthAdjust="spacingAndGlyphs">359.9886V</text>
<text class="c" x="660.9" y="468.8" textLength="86" lengthAdjust="spacingAndGlyphs">109.13498V</text>
<text class="w" x="717.1" y="346.3" textLength="19.8" lengthAdjust="spacingAndGlyphs">R6</text>
<text class="w" x="717.1" y="366" textLength="26.8" lengthAdjust="spacingAndGlyphs">22k</text>
<text class="w" x="840.1" y="387.4" textLength="19.6" lengthAdjust="spacingAndGlyphs">R9</text>
<text class="w" x="833.7" y="429.6" textLength="35.2" lengthAdjust="spacingAndGlyphs">220k</text>
<text class="w" x="814.7" y="449.7" textLength="19.5" lengthAdjust="spacingAndGlyphs">C1</text>
<text class="w" x="807.7" y="486.6" textLength="36.1" lengthAdjust="spacingAndGlyphs">220n</text>
<text class="w" x="919.1" y="448" textLength="19.8" lengthAdjust="spacingAndGlyphs">R5</text>
<text class="w" x="915.3" y="492.7" textLength="30.6" lengthAdjust="spacingAndGlyphs">5.6k</text>
<text class="w" x="853.4" y="520.7" textLength="19.9" lengthAdjust="spacingAndGlyphs">R8</text>
<text class="w" x="838" y="543.2" textLength="35.3" lengthAdjust="spacingAndGlyphs">110k</text>
<text class="w" x="949.1" y="552.8" textLength="19.7" lengthAdjust="spacingAndGlyphs">C3</text>
<text class="w" x="949.9" y="583" textLength="35.8" lengthAdjust="spacingAndGlyphs">220n</text>
<text class="c" x="1033.7" y="597.7" textLength="105.2" lengthAdjust="spacingAndGlyphs">-95.989166mA</text>
<text class="w" x="1012.3" y="543.2" textLength="19.6" lengthAdjust="spacingAndGlyphs">R3</text>
<text class="w" x="1016.1" y="564" textLength="8.8" lengthAdjust="spacingAndGlyphs">1</text>
<text class="w" x="1018.48" y="416.7" textLength="7.49" lengthAdjust="spacingAndGlyphs" style="font-size:5.6px">U1</text>
<text class="w" x="999.18" y="505.9" textLength="15.99" lengthAdjust="spacingAndGlyphs" style="font-size:5.6px">GU50</text>
<text class="c" x="1162.4" y="330.4" textLength="86.3" lengthAdjust="spacingAndGlyphs">359.81789V</text>
<text class="c" x="1152.3" y="369.5" textLength="99.5" lengthAdjust="spacingAndGlyphs">89.915266mA</text>
<text class="c" x="1152.3" y="428.4" textLength="99.5" lengthAdjust="spacingAndGlyphs">6.0738996mA</text>
<text class="c" x="1162.4" y="458.7" textLength="86.3" lengthAdjust="spacingAndGlyphs">239.95006V</text>
<text class="w" x="1026.2" y="286" textLength="20.1" lengthAdjust="spacingAndGlyphs">R2</text>
<text class="w" x="1026.9" y="307.7" textLength="8.5" lengthAdjust="spacingAndGlyphs">1</text>
<text class="w" x="1085.3" y="493.5" textLength="27.9" lengthAdjust="spacingAndGlyphs">RS1</text>
<text class="w" x="1085.5" y="515.7" textLength="73.2" lengthAdjust="spacingAndGlyphs">{Rscreen}</text>
<text class="w" x="988.3" y="206.5" textLength="16.8" lengthAdjust="spacingAndGlyphs">L1</text>
<text class="w" x="890.3" y="227.4" textLength="109.8" lengthAdjust="spacingAndGlyphs">{{Rload}/100}</text>
<text class="w" x="1075.4" y="202.2" textLength="17.5" lengthAdjust="spacingAndGlyphs">L2</text>
<text class="w" x="1075.4" y="226.7" textLength="42.4" lengthAdjust="spacingAndGlyphs">80mH</text>
<text class="w" x="1097.4" y="143.6" textLength="19.9" lengthAdjust="spacingAndGlyphs">R4</text>
<text class="w" x="1096.4" y="179.4" textLength="21.9" lengthAdjust="spacingAndGlyphs">0.7</text>
<text class="w" x="1154.4" y="207.2" textLength="19.4" lengthAdjust="spacingAndGlyphs">R1</text>
<text class="w" x="1154.4" y="228.7" textLength="57.7" lengthAdjust="spacingAndGlyphs">{LOAD}</text>
<text class="y" x="1007.87" y="178.8" textLength="50.41" lengthAdjust="spacingAndGlyphs" style="font-size:5.8px">K L1 L2 0.99995</text>
<text class="r" x="549.7" y="162.3" textLength="20.6" lengthAdjust="spacingAndGlyphs">Vp</text>
<text class="r" x="550.2" y="251.3" textLength="31.7" lengthAdjust="spacingAndGlyphs">VG2</text>
<text class="r" x="550.8" y="331.2" textLength="36.4" lengthAdjust="spacingAndGlyphs">BIAS</text>
<text class="r" x="1164.4" y="162.2" textLength="30.3" lengthAdjust="spacingAndGlyphs">OUT</text>
<text class="r" x="76.2" y="489.2" textLength="30.7" lengthAdjust="spacingAndGlyphs">B+2</text>
<text class="r" x="895.7" y="162.3" textLength="20.6" lengthAdjust="spacingAndGlyphs">Vp</text>
<text class="r" x="1151.2" y="548" textLength="29.8" lengthAdjust="spacingAndGlyphs">VG2</text>
<text class="rv" transform="translate(770.8 276) rotate(-90)" textLength="31.2" lengthAdjust="spacingAndGlyphs">B+2</text>
<text class="rv" transform="translate(890 626.3) rotate(-90)" textLength="36.5" lengthAdjust="spacingAndGlyphs">BIAS</text>
<text class="rv" transform="translate(949.3 714.6) rotate(-90)" textLength="91.2" lengthAdjust="spacingAndGlyphs">REAL_INPUT</text>
<text class="c" x="206.9" y="152.8" textLength="159.5" lengthAdjust="spacingAndGlyphs">2.5k / 8 ohm = 312.5X</text>
<text class="c" x="206.9" y="171.8" textLength="205.7" lengthAdjust="spacingAndGlyphs">.step param LOAD list 6 8 150</text>
<text class="y" x="206.9" y="192" textLength="120.4" lengthAdjust="spacingAndGlyphs">.param LOAD = 8</text>
<text class="y" x="206.9" y="211.7" textLength="117.8" lengthAdjust="spacingAndGlyphs">.param Vq=360v</text>
<text class="y" x="206.9" y="231.5" textLength="141.8" lengthAdjust="spacingAndGlyphs">.param maxdis=40w</text>
<text class="y" x="206.9" y="251" textLength="122.1" lengthAdjust="spacingAndGlyphs">.param IA=90mA</text>
<text class="y" x="206.9" y="271" textLength="116.6" lengthAdjust="spacingAndGlyphs">.param sg=260V</text>
<text class="y" x="206.9" y="291" textLength="208.7" lengthAdjust="spacingAndGlyphs">.param Rload={LOAD*312.5}</text>
<text class="y" x="206.9" y="310.5" textLength="144.8" lengthAdjust="spacingAndGlyphs">.param bias=-28.55v</text>
<text class="y" x="206.9" y="330.5" textLength="151.2" lengthAdjust="spacingAndGlyphs">.param RScreen=3.3k</text>
<text class="y" x="206.9" y="349.9" textLength="194" lengthAdjust="spacingAndGlyphs">.inc GU50-PAINT TOOLS.txt</text>
<text class="y" x="206.9" y="369.8" textLength="156" lengthAdjust="spacingAndGlyphs">.inc ECC88_AYUMI.txt</text>
<text class="y" x="206.9" y="468.6" textLength="126" lengthAdjust="spacingAndGlyphs">.tran 0 100m 80m</text>
<text class="c" x="206.9" y="532.7" textLength="131.8" lengthAdjust="spacingAndGlyphs">81% W MAX GU50</text>
<text class="c" x="206.9" y="598.2" textLength="175.4" lengthAdjust="spacingAndGlyphs">NO FEEDBACK - NO Rg2:</text>
<text class="c" x="206.9" y="627.2" textLength="338.3" lengthAdjust="spacingAndGlyphs">IN = 28.5vP - OUT = 17.6W RMS   -  THD = 13%</text>
<text class="c" x="206.9" y="647.3" textLength="342.5" lengthAdjust="spacingAndGlyphs">Fond. = 21.4 dB - 2ºHD = 0.6 dB - 3ºHD = 0.6 dB</text>
<text class="c" x="206.9" y="682.2" textLength="185.3" lengthAdjust="spacingAndGlyphs">CON FEEDBACK - NO Rg2:</text>
<text class="c" x="206.9" y="710.8" textLength="389.6" lengthAdjust="spacingAndGlyphs">IN = 28.5vP + 3Vp  - OUT = 16.7W RMS   -  THD = 11%</text>
<text class="c" x="206.9" y="730.6" textLength="335.5" lengthAdjust="spacingAndGlyphs">Fond. = 21.2 dB - 2ºHD = 0.9 dB - 3ºHD = -1 dB</text>
<text class="c" x="206.9" y="770.6" textLength="203.6" lengthAdjust="spacingAndGlyphs">NO FEEDBACK + Rg2 = 3.3k:</text>
<text class="c" x="206.9" y="799.7" textLength="342" lengthAdjust="spacingAndGlyphs">IN = 28.5vP - OUT = 10.9W RMS   -  THD = 7.4%</text>
<text class="c" x="206.9" y="819.5" textLength="354.7" lengthAdjust="spacingAndGlyphs">Fond. = 19.4 dB - 2ºHD = -8.2 dB - 3ºHD = -4.8 dB</text>
<text class="y" x="207.02" y="407.7" textLength="112.5" lengthAdjust="spacingAndGlyphs" style="font-size:8px">.OPTIONS numdgt=16</text>
<text class="y" x="207.02" y="417.4" textLength="122.2" lengthAdjust="spacingAndGlyphs" style="font-size:8px">.OPTIONS plotwinsize=0</text>
<text class="y" x="207.02" y="426.5" textLength="81" lengthAdjust="spacingAndGlyphs" style="font-size:8px">.four 1k v(OUT)</text>
<text class="c" x="206.99" y="487.2" textLength="235.83" lengthAdjust="spacingAndGlyphs" style="font-size:9.5px">.dc VA 0 900V 1 Vbias list 0V {bias} {2*bias}</text>
<text class="c" x="206.99" y="501.9" textLength="179.43" lengthAdjust="spacingAndGlyphs" style="font-size:9.5px">.dc VA 0 900V 1 Vbias 0V -50V -1V</text>
<text class="c" x="206.99" y="556" textLength="218.63" lengthAdjust="spacingAndGlyphs" style="font-size:9.5px">28.5Vp MAX IN INGRESSO CON Rg2 = 3.3k</text>
<text class="c" x="206.99" y="567.8" textLength="152.13" lengthAdjust="spacingAndGlyphs" style="font-size:9.5px">CON Rg2 = 3.3k - Vg2 = 260V</text>
<text class="c" x="459.3" y="434" textLength="172.5" lengthAdjust="spacingAndGlyphs">1.23V = 28.5Vp con NFB</text>
<text class="c" x="459.3" y="451.6" textLength="203.5" lengthAdjust="spacingAndGlyphs">1.095V  =  28.5Vp senza NFB</text>
<text class="c" x="651.9" y="770.4" textLength="213.2" lengthAdjust="spacingAndGlyphs">CON FEEDBACK + Rg2 = 3.3k:</text>
<text class="c" x="651.9" y="799.6" textLength="393.5" lengthAdjust="spacingAndGlyphs">IN = 28.5vP + 3Vp  - OUT = 10.6W RMS   -  THD = 6.7%</text>
<text class="c" x="651.9" y="819.8" textLength="350.8" lengthAdjust="spacingAndGlyphs">Fond. = 19.3 dB - 2ºHD = -10 dB - 3ºHD = -5.5 dB</text>
</svg>
</div>
</body></html>
